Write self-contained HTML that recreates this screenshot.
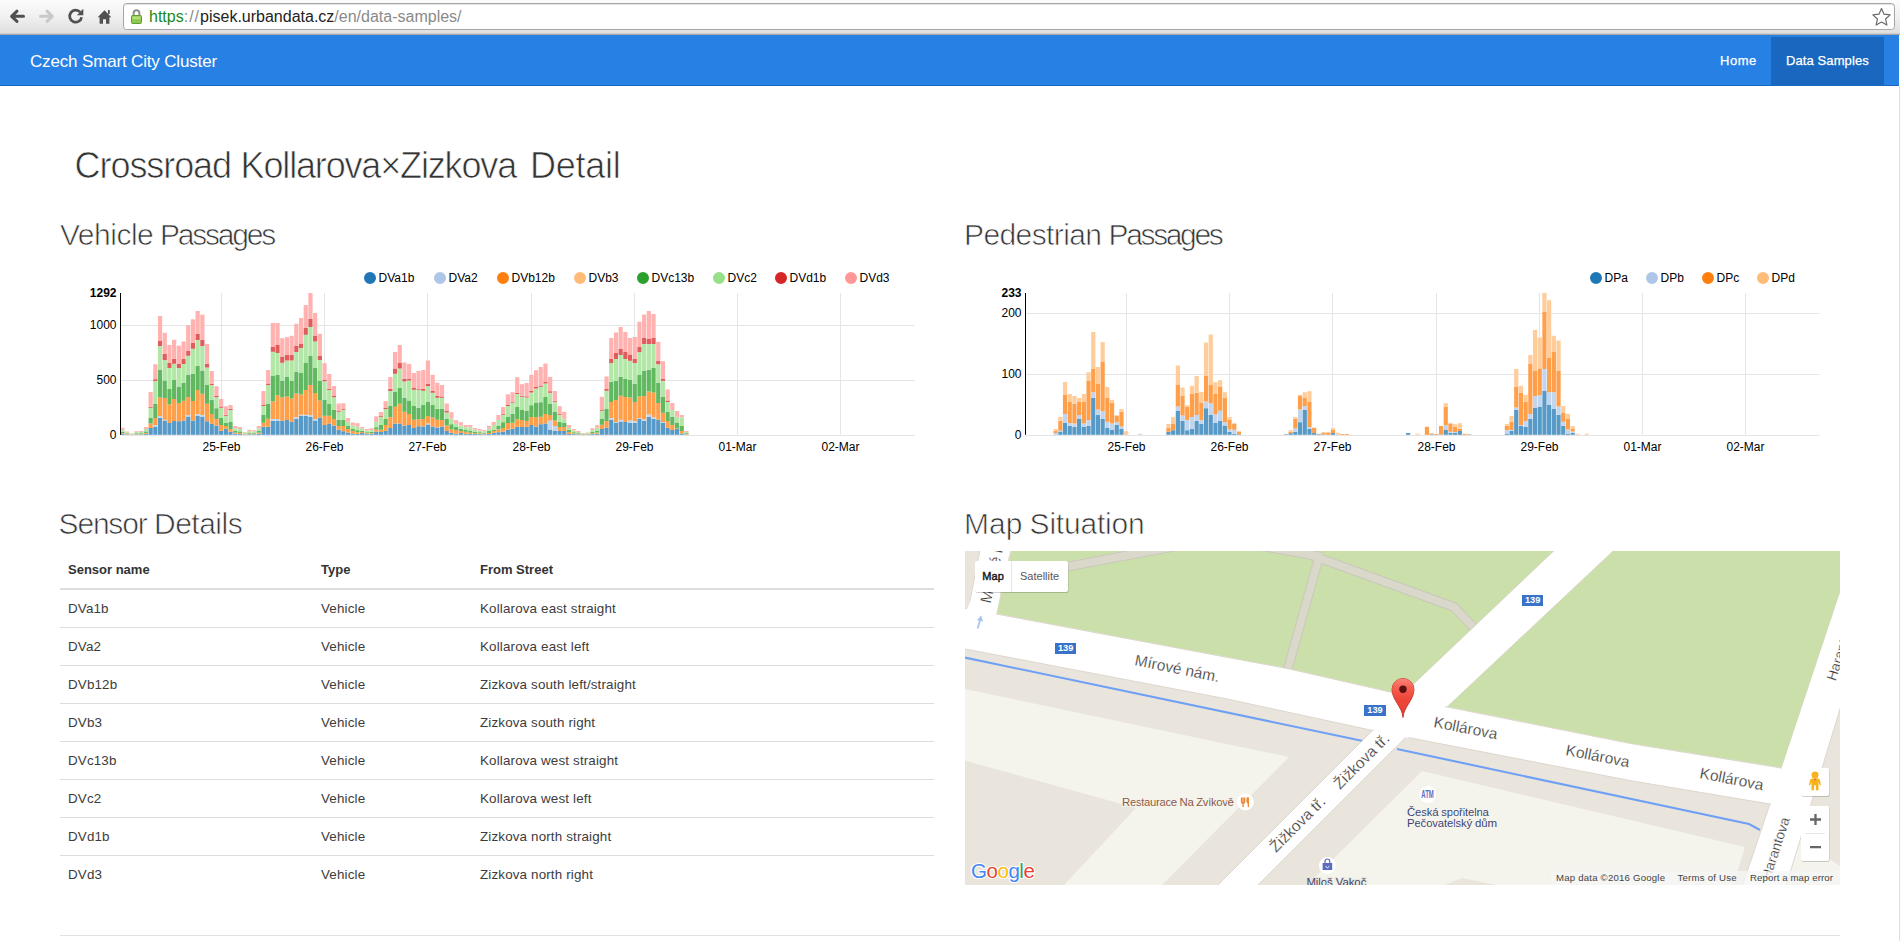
<!DOCTYPE html>
<html lang="en"><head><meta charset="utf-8"><title>Czech Smart City Cluster</title>
<style>
html,body{margin:0;padding:0;background:#fff;overflow:hidden}
body{width:1900px;height:941px;position:relative;font-family:"Liberation Sans",sans-serif;color:#333}
.abs{position:absolute;white-space:nowrap}
#nav{position:absolute;left:0;top:35px;width:1899px;height:50px;background:#2780e3;border-bottom:1px solid #1967be}
#nav .brand{position:absolute;left:30px;top:16px;font-size:17px;line-height:22px;letter-spacing:-0.16px;color:#fff;white-space:nowrap}
#nav .act{position:absolute;left:1771px;top:2px;width:113px;height:48px;background:#1967be}
#nav .lnk{position:absolute;top:17px;font-size:13px;line-height:18px;color:#fff;white-space:nowrap;-webkit-text-stroke:0.25px #fff}
h1,h2{margin:0;font-weight:400;position:absolute;white-space:nowrap;color:#333;-webkit-text-stroke:0.7px #fff}
h1{font-size:36px;line-height:40px}
h2{font-size:30px;line-height:34px}
h1 span,h2 span{position:absolute;top:0;white-space:nowrap}
.chart{position:absolute;overflow:visible}
.chart .g{stroke:#e5e5e5;stroke-width:1}
.chart .t{font:12px "Liberation Sans",sans-serif;fill:#000}
.chart .b{font-weight:700}
#tbl{position:absolute;left:60px;top:551px;width:874px}
.th{position:absolute;left:0;top:0;width:874px;height:37px;border-bottom:2px solid #ddd;font-weight:700;font-size:13px}
.tr{position:absolute;left:60px;width:874px;height:37px;border-bottom:1px solid #ddd;font-size:13.4px;letter-spacing:0.15px;color:#3c3c3c}
.th span,.tr span{position:absolute;top:10px;line-height:18px;white-space:nowrap}
.c1{left:8px}.c2{left:261px}.c3{left:420px}
#hr{position:absolute;left:60px;top:935px;width:1780px;height:1px;background:#e2e2e2}
#map{position:absolute;left:965px;top:551px;width:875px;height:334px;overflow:hidden;background:#e9e5dc}
</style></head><body>
<div id="chrome" style="position:absolute;left:0;top:0;width:1900px;height:35px;background:linear-gradient(#fcfcfc,#f1f1f1 45%,#e0e0e0 92%,#dadada 95%,#a9a9a9 98%);"></div>
<div id="addr" style="position:absolute;left:123px;top:3px;width:1770px;height:25px;border:1px solid #a6a6a6;border-radius:3.5px;background:#fff;box-sizing:content-box;box-shadow:inset 0 1px 1px rgba(0,0,0,.12)"></div>
<svg style="position:absolute;left:0;top:0" width="1900" height="35" viewBox="0 0 1900 35">
<g fill="none" stroke-linecap="round" stroke-linejoin="round">
<path d="M23.5,16.3H12.5M17,11.2L11.6,16.3L17,21.4" stroke="#505050" stroke-width="3"/>
<path d="M40.5,16.3H51.5M47,11.2L52.4,16.3L47,21.4" stroke="#c9c9c9" stroke-width="3"/>
<path d="M80.2,12.2A6,6 0 1 0 81.6,17.2" stroke="#505050" stroke-width="2.7" stroke-linecap="butt"/>
</g>
<path d="M83.3,8.8V15.2H76.9z" fill="#505050"/>
<path d="M104.5,10.2L111.3,17.3H109.4V23.8H106V19.2H103V23.8H99.6V17.3H97.7z" fill="#505050"/>
<rect x="108" y="10" width="1.7" height="4" fill="#505050"/>
<path d="M133.6,15.8V13.2A2.9,3 0 0 1 139.4,13.2V15.8" fill="none" stroke="#8d8d8d" stroke-width="1.9"/>
<rect x="131.5" y="15.5" width="10" height="8" rx="1" fill="#8ec94f" stroke="#5e9e2c" stroke-width="1"/>
<rect x="132.6" y="16.6" width="7.8" height="2.6" fill="#b3e07c"/>
<path d="M1881.5,8.6l2.55,5.6l6.1,0.7l-4.55,4.15l1.25,6.05l-5.35,-3.05l-5.35,3.05l1.25,-6.05l-4.55,-4.15l6.1,-0.7z" fill="#fff" stroke="#6a6a6a" stroke-width="1.2" stroke-linejoin="round"/>
</svg>
<div class="abs" style="left:149px;top:7px;font-size:16px;line-height:20px;letter-spacing:0;color:#222"><span style="color:#1a8a1a">https</span><span style="color:#8a8a8a;letter-spacing:1px">://</span>pisek.urbandata.cz<span style="color:#8a8a8a">/en/data-samples/</span></div>

<div id="nav"><span class="brand">Czech Smart City Cluster</span><div class="act"></div>
<span class="lnk" style="left:1720px;letter-spacing:0.55px">Home</span><span class="lnk" style="left:1786px;letter-spacing:0.1px">Data Samples</span></div>
<h1 style="left:74.6px;top:145.6px"><span style="left:0.0px;letter-spacing:-1.07px">Crossroad</span> <span style="left:166.0px;letter-spacing:-1.16px">Kollarova×Zizkova</span> <span style="left:455.4px;letter-spacing:-0.28px">Detail</span></h1>
<h2 style="left:60.0px;top:218px"><span style="left:0.0px;letter-spacing:-0.5px">Vehicle</span> <span style="left:100.0px;letter-spacing:-2.23px">Passages</span></h2>
<h2 style="left:964.0px;top:218px"><span style="left:0.0px;letter-spacing:-0.6px">Pedestrian</span> <span style="left:144.6px;letter-spacing:-2.37px">Passages</span></h2>
<svg class="chart" style="left:50px;top:265px" width="890" height="200" viewBox="50 265 890 200">
<line x1="221.5" x2="221.5" y1="293.0" y2="434.8" class="g"/>
<line x1="324.5" x2="324.5" y1="293.0" y2="434.8" class="g"/>
<line x1="427.5" x2="427.5" y1="293.0" y2="434.8" class="g"/>
<line x1="531.5" x2="531.5" y1="293.0" y2="434.8" class="g"/>
<line x1="634.5" x2="634.5" y1="293.0" y2="434.8" class="g"/>
<line x1="737.5" x2="737.5" y1="293.0" y2="434.8" class="g"/>
<line x1="840.5" x2="840.5" y1="293.0" y2="434.8" class="g"/>
<line x1="120.5" x2="914.5" y1="435.5" y2="435.5" class="g"/>
<line x1="120.5" x2="914.5" y1="380.5" y2="380.5" class="g"/>
<line x1="120.5" x2="914.5" y1="325.5" y2="325.5" class="g"/>
<rect x="120.35" y="433.96" width="4.2" height="0.84" fill="#5799c7"/>
<rect x="120.35" y="433.12" width="4.2" height="0.84" fill="#ff9f4a"/>
<rect x="120.35" y="431.72" width="4.2" height="1.40" fill="#61b861"/>
<rect x="120.35" y="429.62" width="4.2" height="2.10" fill="#b2e7a7"/>
<rect x="120.35" y="427.80" width="4.2" height="1.82" fill="#ffb2b0"/>
<rect x="125.05" y="434.40" width="4.2" height="0.40" fill="#5799c7"/>
<rect x="125.05" y="434.01" width="4.2" height="0.40" fill="#ff9f4a"/>
<rect x="125.05" y="433.35" width="4.2" height="0.66" fill="#61b861"/>
<rect x="125.05" y="432.36" width="4.2" height="0.99" fill="#b2e7a7"/>
<rect x="125.05" y="431.50" width="4.2" height="0.86" fill="#ffb2b0"/>
<rect x="129.75" y="434.64" width="4.2" height="0.16" fill="#5799c7"/>
<rect x="129.75" y="434.49" width="4.2" height="0.16" fill="#ff9f4a"/>
<rect x="129.75" y="434.23" width="4.2" height="0.26" fill="#61b861"/>
<rect x="129.75" y="433.84" width="4.2" height="0.39" fill="#b2e7a7"/>
<rect x="129.75" y="433.50" width="4.2" height="0.34" fill="#ffb2b0"/>
<rect x="134.45" y="434.37" width="4.2" height="0.43" fill="#5799c7"/>
<rect x="134.45" y="433.94" width="4.2" height="0.43" fill="#ff9f4a"/>
<rect x="134.45" y="433.22" width="4.2" height="0.72" fill="#61b861"/>
<rect x="134.45" y="432.14" width="4.2" height="1.08" fill="#b2e7a7"/>
<rect x="134.45" y="431.20" width="4.2" height="0.94" fill="#ffb2b0"/>
<rect x="139.15" y="434.34" width="4.2" height="0.46" fill="#5799c7"/>
<rect x="139.15" y="433.89" width="4.2" height="0.46" fill="#ff9f4a"/>
<rect x="139.15" y="433.13" width="4.2" height="0.76" fill="#61b861"/>
<rect x="139.15" y="431.99" width="4.2" height="1.14" fill="#b2e7a7"/>
<rect x="139.15" y="431.00" width="4.2" height="0.99" fill="#ffb2b0"/>
<rect x="143.85" y="433.86" width="4.2" height="0.94" fill="#5799c7"/>
<rect x="143.85" y="432.93" width="4.2" height="0.94" fill="#ff9f4a"/>
<rect x="143.85" y="431.37" width="4.2" height="1.56" fill="#61b861"/>
<rect x="143.85" y="429.03" width="4.2" height="2.34" fill="#b2e7a7"/>
<rect x="143.85" y="427.00" width="4.2" height="2.03" fill="#ffb2b0"/>
<rect x="148.55" y="428.00" width="4.2" height="6.80" fill="#5799c7"/>
<rect x="148.55" y="423.50" width="4.2" height="4.50" fill="#ff9f4a"/>
<rect x="148.55" y="418.00" width="4.2" height="5.50" fill="#61b861"/>
<rect x="148.55" y="407.80" width="4.2" height="10.20" fill="#b2e7a7"/>
<rect x="148.55" y="406.80" width="4.2" height="1.00" fill="#e05d5e"/>
<rect x="148.55" y="392.00" width="4.2" height="14.80" fill="#ffb2b0"/>
<rect x="153.25" y="427.00" width="4.2" height="7.80" fill="#5799c7"/>
<rect x="153.25" y="425.00" width="4.2" height="2.00" fill="#c2d5ee"/>
<rect x="153.25" y="418.00" width="4.2" height="7.00" fill="#ff9f4a"/>
<rect x="153.25" y="404.00" width="4.2" height="14.00" fill="#61b861"/>
<rect x="153.25" y="381.00" width="4.2" height="23.00" fill="#b2e7a7"/>
<rect x="153.25" y="379.20" width="4.2" height="1.80" fill="#e05d5e"/>
<rect x="153.25" y="364.20" width="4.2" height="15.00" fill="#ffb2b0"/>
<rect x="157.95" y="417.80" width="4.2" height="17.00" fill="#5799c7"/>
<rect x="157.95" y="416.00" width="4.2" height="1.80" fill="#c2d5ee"/>
<rect x="157.95" y="397.50" width="4.2" height="18.50" fill="#ff9f4a"/>
<rect x="157.95" y="370.00" width="4.2" height="27.50" fill="#61b861"/>
<rect x="157.95" y="346.00" width="4.2" height="24.00" fill="#b2e7a7"/>
<rect x="157.95" y="341.00" width="4.2" height="5.00" fill="#e05d5e"/>
<rect x="157.95" y="316.00" width="4.2" height="25.00" fill="#ffb2b0"/>
<rect x="162.65" y="420.50" width="4.2" height="14.30" fill="#5799c7"/>
<rect x="162.65" y="419.80" width="4.2" height="0.70" fill="#c2d5ee"/>
<rect x="162.65" y="398.00" width="4.2" height="21.80" fill="#ff9f4a"/>
<rect x="162.65" y="380.50" width="4.2" height="17.50" fill="#61b861"/>
<rect x="162.65" y="360.00" width="4.2" height="20.50" fill="#b2e7a7"/>
<rect x="162.65" y="354.00" width="4.2" height="6.00" fill="#e05d5e"/>
<rect x="162.65" y="332.80" width="4.2" height="21.20" fill="#ffb2b0"/>
<rect x="167.35" y="423.00" width="4.2" height="11.80" fill="#5799c7"/>
<rect x="167.35" y="404.50" width="4.2" height="18.50" fill="#ff9f4a"/>
<rect x="167.35" y="389.00" width="4.2" height="15.50" fill="#61b861"/>
<rect x="167.35" y="368.00" width="4.2" height="21.00" fill="#b2e7a7"/>
<rect x="167.35" y="363.00" width="4.2" height="5.00" fill="#e05d5e"/>
<rect x="167.35" y="345.00" width="4.2" height="18.00" fill="#ffb2b0"/>
<rect x="172.05" y="421.00" width="4.2" height="13.80" fill="#5799c7"/>
<rect x="172.05" y="399.00" width="4.2" height="22.00" fill="#ff9f4a"/>
<rect x="172.05" y="380.00" width="4.2" height="19.00" fill="#61b861"/>
<rect x="172.05" y="363.80" width="4.2" height="16.20" fill="#b2e7a7"/>
<rect x="172.05" y="358.80" width="4.2" height="5.00" fill="#e05d5e"/>
<rect x="172.05" y="339.80" width="4.2" height="19.00" fill="#ffb2b0"/>
<rect x="176.75" y="421.20" width="4.2" height="13.60" fill="#5799c7"/>
<rect x="176.75" y="403.00" width="4.2" height="18.20" fill="#ff9f4a"/>
<rect x="176.75" y="386.50" width="4.2" height="16.50" fill="#61b861"/>
<rect x="176.75" y="368.00" width="4.2" height="18.50" fill="#b2e7a7"/>
<rect x="176.75" y="364.00" width="4.2" height="4.00" fill="#e05d5e"/>
<rect x="176.75" y="345.70" width="4.2" height="18.30" fill="#ffb2b0"/>
<rect x="181.45" y="420.50" width="4.2" height="14.30" fill="#5799c7"/>
<rect x="181.45" y="400.80" width="4.2" height="19.70" fill="#ff9f4a"/>
<rect x="181.45" y="383.00" width="4.2" height="17.80" fill="#61b861"/>
<rect x="181.45" y="364.00" width="4.2" height="19.00" fill="#b2e7a7"/>
<rect x="181.45" y="359.00" width="4.2" height="5.00" fill="#e05d5e"/>
<rect x="181.45" y="341.50" width="4.2" height="17.50" fill="#ffb2b0"/>
<rect x="186.15" y="416.50" width="4.2" height="18.30" fill="#5799c7"/>
<rect x="186.15" y="415.00" width="4.2" height="1.50" fill="#c2d5ee"/>
<rect x="186.15" y="397.00" width="4.2" height="18.00" fill="#ff9f4a"/>
<rect x="186.15" y="375.00" width="4.2" height="22.00" fill="#61b861"/>
<rect x="186.15" y="355.80" width="4.2" height="19.20" fill="#b2e7a7"/>
<rect x="186.15" y="351.00" width="4.2" height="4.80" fill="#e05d5e"/>
<rect x="186.15" y="325.30" width="4.2" height="25.70" fill="#ffb2b0"/>
<rect x="190.85" y="420.50" width="4.2" height="14.30" fill="#5799c7"/>
<rect x="190.85" y="401.00" width="4.2" height="19.50" fill="#ff9f4a"/>
<rect x="190.85" y="374.00" width="4.2" height="27.00" fill="#61b861"/>
<rect x="190.85" y="348.80" width="4.2" height="25.20" fill="#b2e7a7"/>
<rect x="190.85" y="343.00" width="4.2" height="5.80" fill="#e05d5e"/>
<rect x="190.85" y="319.30" width="4.2" height="23.70" fill="#ffb2b0"/>
<rect x="195.55" y="416.00" width="4.2" height="18.80" fill="#5799c7"/>
<rect x="195.55" y="414.00" width="4.2" height="2.00" fill="#c2d5ee"/>
<rect x="195.55" y="390.00" width="4.2" height="24.00" fill="#ff9f4a"/>
<rect x="195.55" y="366.00" width="4.2" height="24.00" fill="#61b861"/>
<rect x="195.55" y="340.00" width="4.2" height="26.00" fill="#b2e7a7"/>
<rect x="195.55" y="334.00" width="4.2" height="6.00" fill="#e05d5e"/>
<rect x="195.55" y="311.00" width="4.2" height="23.00" fill="#ffb2b0"/>
<rect x="200.25" y="416.50" width="4.2" height="18.30" fill="#5799c7"/>
<rect x="200.25" y="415.00" width="4.2" height="1.50" fill="#c2d5ee"/>
<rect x="200.25" y="393.80" width="4.2" height="21.20" fill="#ff9f4a"/>
<rect x="200.25" y="370.50" width="4.2" height="23.30" fill="#61b861"/>
<rect x="200.25" y="346.00" width="4.2" height="24.50" fill="#b2e7a7"/>
<rect x="200.25" y="340.00" width="4.2" height="6.00" fill="#e05d5e"/>
<rect x="200.25" y="314.70" width="4.2" height="25.30" fill="#ffb2b0"/>
<rect x="204.95" y="421.20" width="4.2" height="13.60" fill="#5799c7"/>
<rect x="204.95" y="403.80" width="4.2" height="17.40" fill="#ff9f4a"/>
<rect x="204.95" y="385.00" width="4.2" height="18.80" fill="#61b861"/>
<rect x="204.95" y="367.50" width="4.2" height="17.50" fill="#b2e7a7"/>
<rect x="204.95" y="364.00" width="4.2" height="3.50" fill="#e05d5e"/>
<rect x="204.95" y="343.80" width="4.2" height="20.20" fill="#ffb2b0"/>
<rect x="209.65" y="423.80" width="4.2" height="11.00" fill="#5799c7"/>
<rect x="209.65" y="414.00" width="4.2" height="9.80" fill="#ff9f4a"/>
<rect x="209.65" y="400.00" width="4.2" height="14.00" fill="#61b861"/>
<rect x="209.65" y="385.00" width="4.2" height="15.00" fill="#b2e7a7"/>
<rect x="209.65" y="383.80" width="4.2" height="1.20" fill="#e05d5e"/>
<rect x="209.65" y="371.00" width="4.2" height="12.80" fill="#ffb2b0"/>
<rect x="214.35" y="425.50" width="4.2" height="9.30" fill="#5799c7"/>
<rect x="214.35" y="419.00" width="4.2" height="6.50" fill="#ff9f4a"/>
<rect x="214.35" y="408.20" width="4.2" height="10.80" fill="#61b861"/>
<rect x="214.35" y="397.20" width="4.2" height="11.00" fill="#b2e7a7"/>
<rect x="214.35" y="395.80" width="4.2" height="1.40" fill="#e05d5e"/>
<rect x="214.35" y="386.20" width="4.2" height="9.60" fill="#ffb2b0"/>
<rect x="219.05" y="430.80" width="4.2" height="4.00" fill="#5799c7"/>
<rect x="219.05" y="425.00" width="4.2" height="5.80" fill="#ff9f4a"/>
<rect x="219.05" y="417.80" width="4.2" height="7.20" fill="#61b861"/>
<rect x="219.05" y="407.80" width="4.2" height="10.00" fill="#b2e7a7"/>
<rect x="219.05" y="406.50" width="4.2" height="1.30" fill="#e05d5e"/>
<rect x="219.05" y="399.00" width="4.2" height="7.50" fill="#ffb2b0"/>
<rect x="223.75" y="428.80" width="4.2" height="6.00" fill="#5799c7"/>
<rect x="223.75" y="426.00" width="4.2" height="2.80" fill="#ff9f4a"/>
<rect x="223.75" y="422.80" width="4.2" height="3.20" fill="#61b861"/>
<rect x="223.75" y="415.80" width="4.2" height="7.00" fill="#b2e7a7"/>
<rect x="223.75" y="414.80" width="4.2" height="1.00" fill="#e05d5e"/>
<rect x="223.75" y="406.30" width="4.2" height="8.50" fill="#ffb2b0"/>
<rect x="228.45" y="431.80" width="4.2" height="3.00" fill="#5799c7"/>
<rect x="228.45" y="429.00" width="4.2" height="2.80" fill="#ff9f4a"/>
<rect x="228.45" y="422.00" width="4.2" height="7.00" fill="#61b861"/>
<rect x="228.45" y="410.00" width="4.2" height="12.00" fill="#b2e7a7"/>
<rect x="228.45" y="408.80" width="4.2" height="1.20" fill="#e05d5e"/>
<rect x="228.45" y="405.00" width="4.2" height="3.80" fill="#ffb2b0"/>
<rect x="233.15" y="433.74" width="4.2" height="1.06" fill="#5799c7"/>
<rect x="233.15" y="432.69" width="4.2" height="1.06" fill="#ff9f4a"/>
<rect x="233.15" y="430.93" width="4.2" height="1.76" fill="#61b861"/>
<rect x="233.15" y="428.29" width="4.2" height="2.64" fill="#b2e7a7"/>
<rect x="233.15" y="426.00" width="4.2" height="2.29" fill="#ffb2b0"/>
<rect x="237.85" y="433.86" width="4.2" height="0.94" fill="#5799c7"/>
<rect x="237.85" y="432.93" width="4.2" height="0.94" fill="#ff9f4a"/>
<rect x="237.85" y="431.37" width="4.2" height="1.56" fill="#61b861"/>
<rect x="237.85" y="429.03" width="4.2" height="2.34" fill="#b2e7a7"/>
<rect x="237.85" y="427.00" width="4.2" height="2.03" fill="#ffb2b0"/>
<rect x="242.55" y="434.46" width="4.2" height="0.34" fill="#5799c7"/>
<rect x="242.55" y="434.13" width="4.2" height="0.34" fill="#ff9f4a"/>
<rect x="242.55" y="433.57" width="4.2" height="0.56" fill="#61b861"/>
<rect x="242.55" y="432.73" width="4.2" height="0.84" fill="#b2e7a7"/>
<rect x="242.55" y="432.00" width="4.2" height="0.73" fill="#ffb2b0"/>
<rect x="247.25" y="434.20" width="4.2" height="0.60" fill="#5799c7"/>
<rect x="247.25" y="433.60" width="4.2" height="0.60" fill="#ff9f4a"/>
<rect x="247.25" y="432.60" width="4.2" height="1.00" fill="#61b861"/>
<rect x="247.25" y="431.10" width="4.2" height="1.50" fill="#b2e7a7"/>
<rect x="247.25" y="429.80" width="4.2" height="1.30" fill="#ffb2b0"/>
<rect x="251.95" y="434.25" width="4.2" height="0.55" fill="#5799c7"/>
<rect x="251.95" y="433.70" width="4.2" height="0.55" fill="#ff9f4a"/>
<rect x="251.95" y="432.78" width="4.2" height="0.92" fill="#61b861"/>
<rect x="251.95" y="431.40" width="4.2" height="1.38" fill="#b2e7a7"/>
<rect x="251.95" y="430.20" width="4.2" height="1.20" fill="#ffb2b0"/>
<rect x="256.65" y="433.74" width="4.2" height="1.06" fill="#5799c7"/>
<rect x="256.65" y="432.69" width="4.2" height="1.06" fill="#ff9f4a"/>
<rect x="256.65" y="430.93" width="4.2" height="1.76" fill="#61b861"/>
<rect x="256.65" y="428.29" width="4.2" height="2.64" fill="#b2e7a7"/>
<rect x="256.65" y="426.00" width="4.2" height="2.29" fill="#ffb2b0"/>
<rect x="261.35" y="426.80" width="4.2" height="8.00" fill="#5799c7"/>
<rect x="261.35" y="422.80" width="4.2" height="4.00" fill="#ff9f4a"/>
<rect x="261.35" y="415.00" width="4.2" height="7.80" fill="#61b861"/>
<rect x="261.35" y="406.00" width="4.2" height="9.00" fill="#b2e7a7"/>
<rect x="261.35" y="405.00" width="4.2" height="1.00" fill="#e05d5e"/>
<rect x="261.35" y="391.00" width="4.2" height="14.00" fill="#ffb2b0"/>
<rect x="266.05" y="426.80" width="4.2" height="8.00" fill="#5799c7"/>
<rect x="266.05" y="418.80" width="4.2" height="8.00" fill="#ff9f4a"/>
<rect x="266.05" y="404.00" width="4.2" height="14.80" fill="#61b861"/>
<rect x="266.05" y="385.00" width="4.2" height="19.00" fill="#b2e7a7"/>
<rect x="266.05" y="383.50" width="4.2" height="1.50" fill="#e05d5e"/>
<rect x="266.05" y="370.00" width="4.2" height="13.50" fill="#ffb2b0"/>
<rect x="270.75" y="420.80" width="4.2" height="14.00" fill="#5799c7"/>
<rect x="270.75" y="419.00" width="4.2" height="1.80" fill="#c2d5ee"/>
<rect x="270.75" y="401.50" width="4.2" height="17.50" fill="#ff9f4a"/>
<rect x="270.75" y="376.00" width="4.2" height="25.50" fill="#61b861"/>
<rect x="270.75" y="351.80" width="4.2" height="24.20" fill="#b2e7a7"/>
<rect x="270.75" y="347.00" width="4.2" height="4.80" fill="#e05d5e"/>
<rect x="270.75" y="323.00" width="4.2" height="24.00" fill="#ffb2b0"/>
<rect x="275.45" y="420.50" width="4.2" height="14.30" fill="#5799c7"/>
<rect x="275.45" y="419.00" width="4.2" height="1.50" fill="#c2d5ee"/>
<rect x="275.45" y="395.20" width="4.2" height="23.80" fill="#ff9f4a"/>
<rect x="275.45" y="375.00" width="4.2" height="20.20" fill="#61b861"/>
<rect x="275.45" y="353.00" width="4.2" height="22.00" fill="#b2e7a7"/>
<rect x="275.45" y="345.00" width="4.2" height="8.00" fill="#e05d5e"/>
<rect x="275.45" y="323.00" width="4.2" height="22.00" fill="#ffb2b0"/>
<rect x="280.15" y="420.80" width="4.2" height="14.00" fill="#5799c7"/>
<rect x="280.15" y="397.20" width="4.2" height="23.60" fill="#ff9f4a"/>
<rect x="280.15" y="380.80" width="4.2" height="16.40" fill="#61b861"/>
<rect x="280.15" y="362.80" width="4.2" height="18.00" fill="#b2e7a7"/>
<rect x="280.15" y="356.50" width="4.2" height="6.30" fill="#e05d5e"/>
<rect x="280.15" y="338.20" width="4.2" height="18.30" fill="#ffb2b0"/>
<rect x="284.85" y="420.00" width="4.2" height="14.80" fill="#5799c7"/>
<rect x="284.85" y="396.50" width="4.2" height="23.50" fill="#ff9f4a"/>
<rect x="284.85" y="377.00" width="4.2" height="19.50" fill="#61b861"/>
<rect x="284.85" y="360.50" width="4.2" height="16.50" fill="#b2e7a7"/>
<rect x="284.85" y="355.00" width="4.2" height="5.50" fill="#e05d5e"/>
<rect x="284.85" y="337.20" width="4.2" height="17.80" fill="#ffb2b0"/>
<rect x="289.55" y="421.80" width="4.2" height="13.00" fill="#5799c7"/>
<rect x="289.55" y="398.50" width="4.2" height="23.30" fill="#ff9f4a"/>
<rect x="289.55" y="381.00" width="4.2" height="17.50" fill="#61b861"/>
<rect x="289.55" y="360.50" width="4.2" height="20.50" fill="#b2e7a7"/>
<rect x="289.55" y="354.80" width="4.2" height="5.70" fill="#e05d5e"/>
<rect x="289.55" y="335.80" width="4.2" height="19.00" fill="#ffb2b0"/>
<rect x="294.25" y="419.00" width="4.2" height="15.80" fill="#5799c7"/>
<rect x="294.25" y="417.20" width="4.2" height="1.80" fill="#c2d5ee"/>
<rect x="294.25" y="393.50" width="4.2" height="23.70" fill="#ff9f4a"/>
<rect x="294.25" y="372.00" width="4.2" height="21.50" fill="#61b861"/>
<rect x="294.25" y="352.00" width="4.2" height="20.00" fill="#b2e7a7"/>
<rect x="294.25" y="346.00" width="4.2" height="6.00" fill="#e05d5e"/>
<rect x="294.25" y="323.80" width="4.2" height="22.20" fill="#ffb2b0"/>
<rect x="298.95" y="416.00" width="4.2" height="18.80" fill="#5799c7"/>
<rect x="298.95" y="414.80" width="4.2" height="1.20" fill="#c2d5ee"/>
<rect x="298.95" y="394.50" width="4.2" height="20.30" fill="#ff9f4a"/>
<rect x="298.95" y="373.00" width="4.2" height="21.50" fill="#61b861"/>
<rect x="298.95" y="348.00" width="4.2" height="25.00" fill="#b2e7a7"/>
<rect x="298.95" y="343.50" width="4.2" height="4.50" fill="#e05d5e"/>
<rect x="298.95" y="318.00" width="4.2" height="25.50" fill="#ffb2b0"/>
<rect x="303.65" y="416.00" width="4.2" height="18.80" fill="#5799c7"/>
<rect x="303.65" y="414.80" width="4.2" height="1.20" fill="#c2d5ee"/>
<rect x="303.65" y="390.00" width="4.2" height="24.80" fill="#ff9f4a"/>
<rect x="303.65" y="363.00" width="4.2" height="27.00" fill="#61b861"/>
<rect x="303.65" y="334.80" width="4.2" height="28.20" fill="#b2e7a7"/>
<rect x="303.65" y="328.00" width="4.2" height="6.80" fill="#e05d5e"/>
<rect x="303.65" y="305.00" width="4.2" height="23.00" fill="#ffb2b0"/>
<rect x="308.35" y="417.00" width="4.2" height="17.80" fill="#5799c7"/>
<rect x="308.35" y="415.00" width="4.2" height="2.00" fill="#c2d5ee"/>
<rect x="308.35" y="385.00" width="4.2" height="30.00" fill="#ff9f4a"/>
<rect x="308.35" y="356.00" width="4.2" height="29.00" fill="#61b861"/>
<rect x="308.35" y="327.00" width="4.2" height="29.00" fill="#b2e7a7"/>
<rect x="308.35" y="319.00" width="4.2" height="8.00" fill="#e05d5e"/>
<rect x="308.35" y="293.00" width="4.2" height="26.00" fill="#ffb2b0"/>
<rect x="313.05" y="420.50" width="4.2" height="14.30" fill="#5799c7"/>
<rect x="313.05" y="419.00" width="4.2" height="1.50" fill="#c2d5ee"/>
<rect x="313.05" y="393.00" width="4.2" height="26.00" fill="#ff9f4a"/>
<rect x="313.05" y="368.00" width="4.2" height="25.00" fill="#61b861"/>
<rect x="313.05" y="341.50" width="4.2" height="26.50" fill="#b2e7a7"/>
<rect x="313.05" y="336.00" width="4.2" height="5.50" fill="#e05d5e"/>
<rect x="313.05" y="313.00" width="4.2" height="23.00" fill="#ffb2b0"/>
<rect x="317.75" y="417.50" width="4.2" height="17.30" fill="#5799c7"/>
<rect x="317.75" y="400.50" width="4.2" height="17.00" fill="#ff9f4a"/>
<rect x="317.75" y="381.00" width="4.2" height="19.50" fill="#61b861"/>
<rect x="317.75" y="360.00" width="4.2" height="21.00" fill="#b2e7a7"/>
<rect x="317.75" y="356.00" width="4.2" height="4.00" fill="#e05d5e"/>
<rect x="317.75" y="333.80" width="4.2" height="22.20" fill="#ffb2b0"/>
<rect x="322.45" y="425.00" width="4.2" height="9.80" fill="#5799c7"/>
<rect x="322.45" y="415.80" width="4.2" height="9.20" fill="#ff9f4a"/>
<rect x="322.45" y="400.00" width="4.2" height="15.80" fill="#61b861"/>
<rect x="322.45" y="381.20" width="4.2" height="18.80" fill="#b2e7a7"/>
<rect x="322.45" y="380.00" width="4.2" height="1.20" fill="#e05d5e"/>
<rect x="322.45" y="363.20" width="4.2" height="16.80" fill="#ffb2b0"/>
<rect x="327.15" y="423.50" width="4.2" height="11.30" fill="#5799c7"/>
<rect x="327.15" y="415.80" width="4.2" height="7.70" fill="#ff9f4a"/>
<rect x="327.15" y="403.50" width="4.2" height="12.30" fill="#61b861"/>
<rect x="327.15" y="390.00" width="4.2" height="13.50" fill="#b2e7a7"/>
<rect x="327.15" y="388.80" width="4.2" height="1.20" fill="#e05d5e"/>
<rect x="327.15" y="374.00" width="4.2" height="14.80" fill="#ffb2b0"/>
<rect x="331.85" y="425.50" width="4.2" height="9.30" fill="#5799c7"/>
<rect x="331.85" y="419.00" width="4.2" height="6.50" fill="#ff9f4a"/>
<rect x="331.85" y="410.00" width="4.2" height="9.00" fill="#61b861"/>
<rect x="331.85" y="397.20" width="4.2" height="12.80" fill="#b2e7a7"/>
<rect x="331.85" y="396.00" width="4.2" height="1.20" fill="#e05d5e"/>
<rect x="331.85" y="386.00" width="4.2" height="10.00" fill="#ffb2b0"/>
<rect x="336.55" y="429.80" width="4.2" height="5.00" fill="#5799c7"/>
<rect x="336.55" y="426.00" width="4.2" height="3.80" fill="#ff9f4a"/>
<rect x="336.55" y="419.80" width="4.2" height="6.20" fill="#61b861"/>
<rect x="336.55" y="411.80" width="4.2" height="8.00" fill="#b2e7a7"/>
<rect x="336.55" y="411.00" width="4.2" height="0.80" fill="#e05d5e"/>
<rect x="336.55" y="403.50" width="4.2" height="7.50" fill="#ffb2b0"/>
<rect x="341.25" y="431.20" width="4.2" height="3.60" fill="#5799c7"/>
<rect x="341.25" y="426.00" width="4.2" height="5.20" fill="#ff9f4a"/>
<rect x="341.25" y="420.00" width="4.2" height="6.00" fill="#61b861"/>
<rect x="341.25" y="409.80" width="4.2" height="10.20" fill="#b2e7a7"/>
<rect x="341.25" y="409.00" width="4.2" height="0.80" fill="#e05d5e"/>
<rect x="341.25" y="403.20" width="4.2" height="5.80" fill="#ffb2b0"/>
<rect x="345.95" y="432.50" width="4.2" height="2.30" fill="#5799c7"/>
<rect x="345.95" y="429.00" width="4.2" height="3.50" fill="#ff9f4a"/>
<rect x="345.95" y="426.00" width="4.2" height="3.00" fill="#61b861"/>
<rect x="345.95" y="421.80" width="4.2" height="4.20" fill="#b2e7a7"/>
<rect x="345.95" y="418.00" width="4.2" height="3.80" fill="#ffb2b0"/>
<rect x="350.65" y="433.80" width="4.2" height="1.00" fill="#5799c7"/>
<rect x="350.65" y="431.00" width="4.2" height="2.80" fill="#ff9f4a"/>
<rect x="350.65" y="429.00" width="4.2" height="2.00" fill="#61b861"/>
<rect x="350.65" y="425.50" width="4.2" height="3.50" fill="#b2e7a7"/>
<rect x="350.65" y="422.50" width="4.2" height="3.00" fill="#ffb2b0"/>
<rect x="355.35" y="434.00" width="4.2" height="0.80" fill="#5799c7"/>
<rect x="355.35" y="432.20" width="4.2" height="1.80" fill="#ff9f4a"/>
<rect x="355.35" y="430.20" width="4.2" height="2.00" fill="#61b861"/>
<rect x="355.35" y="426.50" width="4.2" height="3.70" fill="#b2e7a7"/>
<rect x="355.35" y="423.20" width="4.2" height="3.30" fill="#ffb2b0"/>
<rect x="360.05" y="433.00" width="4.2" height="1.80" fill="#5799c7"/>
<rect x="360.05" y="432.00" width="4.2" height="1.00" fill="#ff9f4a"/>
<rect x="360.05" y="430.80" width="4.2" height="1.20" fill="#61b861"/>
<rect x="360.05" y="428.50" width="4.2" height="2.30" fill="#b2e7a7"/>
<rect x="360.05" y="427.00" width="4.2" height="1.50" fill="#ffb2b0"/>
<rect x="364.75" y="434.10" width="4.2" height="0.70" fill="#5799c7"/>
<rect x="364.75" y="433.41" width="4.2" height="0.70" fill="#ff9f4a"/>
<rect x="364.75" y="432.25" width="4.2" height="1.16" fill="#61b861"/>
<rect x="364.75" y="430.51" width="4.2" height="1.74" fill="#b2e7a7"/>
<rect x="364.75" y="429.00" width="4.2" height="1.51" fill="#ffb2b0"/>
<rect x="369.45" y="434.01" width="4.2" height="0.79" fill="#5799c7"/>
<rect x="369.45" y="433.22" width="4.2" height="0.79" fill="#ff9f4a"/>
<rect x="369.45" y="431.90" width="4.2" height="1.32" fill="#61b861"/>
<rect x="369.45" y="429.92" width="4.2" height="1.98" fill="#b2e7a7"/>
<rect x="369.45" y="428.20" width="4.2" height="1.72" fill="#ffb2b0"/>
<rect x="374.15" y="431.50" width="4.2" height="3.30" fill="#5799c7"/>
<rect x="374.15" y="429.50" width="4.2" height="2.00" fill="#ff9f4a"/>
<rect x="374.15" y="427.20" width="4.2" height="2.30" fill="#61b861"/>
<rect x="374.15" y="421.80" width="4.2" height="5.40" fill="#b2e7a7"/>
<rect x="374.15" y="416.30" width="4.2" height="5.50" fill="#ffb2b0"/>
<rect x="378.85" y="432.00" width="4.2" height="2.80" fill="#5799c7"/>
<rect x="378.85" y="429.80" width="4.2" height="2.20" fill="#ff9f4a"/>
<rect x="378.85" y="425.00" width="4.2" height="4.80" fill="#61b861"/>
<rect x="378.85" y="416.80" width="4.2" height="8.20" fill="#b2e7a7"/>
<rect x="378.85" y="416.00" width="4.2" height="0.80" fill="#e05d5e"/>
<rect x="378.85" y="412.00" width="4.2" height="4.00" fill="#ffb2b0"/>
<rect x="383.55" y="430.80" width="4.2" height="4.00" fill="#5799c7"/>
<rect x="383.55" y="425.00" width="4.2" height="5.80" fill="#ff9f4a"/>
<rect x="383.55" y="419.00" width="4.2" height="6.00" fill="#61b861"/>
<rect x="383.55" y="409.00" width="4.2" height="10.00" fill="#b2e7a7"/>
<rect x="383.55" y="408.00" width="4.2" height="1.00" fill="#e05d5e"/>
<rect x="383.55" y="401.20" width="4.2" height="6.80" fill="#ffb2b0"/>
<rect x="388.25" y="428.00" width="4.2" height="6.80" fill="#5799c7"/>
<rect x="388.25" y="417.20" width="4.2" height="10.80" fill="#ff9f4a"/>
<rect x="388.25" y="406.00" width="4.2" height="11.20" fill="#61b861"/>
<rect x="388.25" y="391.00" width="4.2" height="15.00" fill="#b2e7a7"/>
<rect x="388.25" y="388.80" width="4.2" height="2.20" fill="#e05d5e"/>
<rect x="388.25" y="377.00" width="4.2" height="11.80" fill="#ffb2b0"/>
<rect x="392.95" y="423.50" width="4.2" height="11.30" fill="#5799c7"/>
<rect x="392.95" y="406.80" width="4.2" height="16.70" fill="#ff9f4a"/>
<rect x="392.95" y="392.00" width="4.2" height="14.80" fill="#61b861"/>
<rect x="392.95" y="373.80" width="4.2" height="18.20" fill="#b2e7a7"/>
<rect x="392.95" y="368.50" width="4.2" height="5.30" fill="#e05d5e"/>
<rect x="392.95" y="352.00" width="4.2" height="16.50" fill="#ffb2b0"/>
<rect x="397.65" y="423.50" width="4.2" height="11.30" fill="#5799c7"/>
<rect x="397.65" y="403.80" width="4.2" height="19.70" fill="#ff9f4a"/>
<rect x="397.65" y="388.00" width="4.2" height="15.80" fill="#61b861"/>
<rect x="397.65" y="368.50" width="4.2" height="19.50" fill="#b2e7a7"/>
<rect x="397.65" y="363.00" width="4.2" height="5.50" fill="#e05d5e"/>
<rect x="397.65" y="345.00" width="4.2" height="18.00" fill="#ffb2b0"/>
<rect x="402.35" y="425.50" width="4.2" height="9.30" fill="#5799c7"/>
<rect x="402.35" y="411.80" width="4.2" height="13.70" fill="#ff9f4a"/>
<rect x="402.35" y="398.00" width="4.2" height="13.80" fill="#61b861"/>
<rect x="402.35" y="381.50" width="4.2" height="16.50" fill="#b2e7a7"/>
<rect x="402.35" y="379.00" width="4.2" height="2.50" fill="#e05d5e"/>
<rect x="402.35" y="362.50" width="4.2" height="16.50" fill="#ffb2b0"/>
<rect x="407.05" y="425.00" width="4.2" height="9.80" fill="#5799c7"/>
<rect x="407.05" y="414.00" width="4.2" height="11.00" fill="#ff9f4a"/>
<rect x="407.05" y="400.50" width="4.2" height="13.50" fill="#61b861"/>
<rect x="407.05" y="380.50" width="4.2" height="20.00" fill="#b2e7a7"/>
<rect x="407.05" y="379.00" width="4.2" height="1.50" fill="#e05d5e"/>
<rect x="407.05" y="364.00" width="4.2" height="15.00" fill="#ffb2b0"/>
<rect x="411.75" y="428.00" width="4.2" height="6.80" fill="#5799c7"/>
<rect x="411.75" y="419.80" width="4.2" height="8.20" fill="#ff9f4a"/>
<rect x="411.75" y="406.00" width="4.2" height="13.80" fill="#61b861"/>
<rect x="411.75" y="389.80" width="4.2" height="16.20" fill="#b2e7a7"/>
<rect x="411.75" y="388.00" width="4.2" height="1.80" fill="#e05d5e"/>
<rect x="411.75" y="373.00" width="4.2" height="15.00" fill="#ffb2b0"/>
<rect x="416.45" y="426.20" width="4.2" height="8.60" fill="#5799c7"/>
<rect x="416.45" y="419.20" width="4.2" height="7.00" fill="#ff9f4a"/>
<rect x="416.45" y="408.00" width="4.2" height="11.20" fill="#61b861"/>
<rect x="416.45" y="389.80" width="4.2" height="18.20" fill="#b2e7a7"/>
<rect x="416.45" y="388.80" width="4.2" height="1.00" fill="#e05d5e"/>
<rect x="416.45" y="371.00" width="4.2" height="17.80" fill="#ffb2b0"/>
<rect x="421.15" y="426.50" width="4.2" height="8.30" fill="#5799c7"/>
<rect x="421.15" y="419.00" width="4.2" height="7.50" fill="#ff9f4a"/>
<rect x="421.15" y="405.00" width="4.2" height="14.00" fill="#61b861"/>
<rect x="421.15" y="390.80" width="4.2" height="14.20" fill="#b2e7a7"/>
<rect x="421.15" y="389.00" width="4.2" height="1.80" fill="#e05d5e"/>
<rect x="421.15" y="370.00" width="4.2" height="19.00" fill="#ffb2b0"/>
<rect x="425.85" y="424.50" width="4.2" height="10.30" fill="#5799c7"/>
<rect x="425.85" y="423.50" width="4.2" height="1.00" fill="#c2d5ee"/>
<rect x="425.85" y="416.00" width="4.2" height="7.50" fill="#ff9f4a"/>
<rect x="425.85" y="402.00" width="4.2" height="14.00" fill="#61b861"/>
<rect x="425.85" y="386.20" width="4.2" height="15.80" fill="#b2e7a7"/>
<rect x="425.85" y="384.00" width="4.2" height="2.20" fill="#e05d5e"/>
<rect x="425.85" y="360.50" width="4.2" height="23.50" fill="#ffb2b0"/>
<rect x="430.55" y="426.50" width="4.2" height="8.30" fill="#5799c7"/>
<rect x="430.55" y="417.50" width="4.2" height="9.00" fill="#ff9f4a"/>
<rect x="430.55" y="405.00" width="4.2" height="12.50" fill="#61b861"/>
<rect x="430.55" y="392.80" width="4.2" height="12.20" fill="#b2e7a7"/>
<rect x="430.55" y="391.00" width="4.2" height="1.80" fill="#e05d5e"/>
<rect x="430.55" y="374.80" width="4.2" height="16.20" fill="#ffb2b0"/>
<rect x="435.25" y="427.50" width="4.2" height="7.30" fill="#5799c7"/>
<rect x="435.25" y="419.80" width="4.2" height="7.70" fill="#ff9f4a"/>
<rect x="435.25" y="408.80" width="4.2" height="11.00" fill="#61b861"/>
<rect x="435.25" y="397.80" width="4.2" height="11.00" fill="#b2e7a7"/>
<rect x="435.25" y="396.00" width="4.2" height="1.80" fill="#e05d5e"/>
<rect x="435.25" y="382.80" width="4.2" height="13.20" fill="#ffb2b0"/>
<rect x="439.95" y="426.50" width="4.2" height="8.30" fill="#5799c7"/>
<rect x="439.95" y="420.00" width="4.2" height="6.50" fill="#ff9f4a"/>
<rect x="439.95" y="409.00" width="4.2" height="11.00" fill="#61b861"/>
<rect x="439.95" y="397.80" width="4.2" height="11.20" fill="#b2e7a7"/>
<rect x="439.95" y="396.50" width="4.2" height="1.30" fill="#e05d5e"/>
<rect x="439.95" y="385.00" width="4.2" height="11.50" fill="#ffb2b0"/>
<rect x="444.65" y="431.00" width="4.2" height="3.80" fill="#5799c7"/>
<rect x="444.65" y="425.50" width="4.2" height="5.50" fill="#ff9f4a"/>
<rect x="444.65" y="419.00" width="4.2" height="6.50" fill="#61b861"/>
<rect x="444.65" y="412.50" width="4.2" height="6.50" fill="#b2e7a7"/>
<rect x="444.65" y="411.00" width="4.2" height="1.50" fill="#e05d5e"/>
<rect x="444.65" y="403.50" width="4.2" height="7.50" fill="#ffb2b0"/>
<rect x="449.35" y="432.80" width="4.2" height="2.00" fill="#5799c7"/>
<rect x="449.35" y="429.50" width="4.2" height="3.30" fill="#ff9f4a"/>
<rect x="449.35" y="424.20" width="4.2" height="5.30" fill="#61b861"/>
<rect x="449.35" y="418.50" width="4.2" height="5.70" fill="#b2e7a7"/>
<rect x="449.35" y="412.20" width="4.2" height="6.30" fill="#ffb2b0"/>
<rect x="454.05" y="433.80" width="4.2" height="1.00" fill="#5799c7"/>
<rect x="454.05" y="430.00" width="4.2" height="3.80" fill="#ff9f4a"/>
<rect x="454.05" y="427.00" width="4.2" height="3.00" fill="#61b861"/>
<rect x="454.05" y="423.80" width="4.2" height="3.20" fill="#b2e7a7"/>
<rect x="454.05" y="420.20" width="4.2" height="3.60" fill="#ffb2b0"/>
<rect x="458.75" y="433.00" width="4.2" height="1.80" fill="#5799c7"/>
<rect x="458.75" y="431.00" width="4.2" height="2.00" fill="#ff9f4a"/>
<rect x="458.75" y="428.80" width="4.2" height="2.20" fill="#61b861"/>
<rect x="458.75" y="425.50" width="4.2" height="3.30" fill="#b2e7a7"/>
<rect x="458.75" y="422.20" width="4.2" height="3.30" fill="#ffb2b0"/>
<rect x="463.45" y="433.80" width="4.2" height="1.00" fill="#5799c7"/>
<rect x="463.45" y="431.80" width="4.2" height="2.00" fill="#ff9f4a"/>
<rect x="463.45" y="430.00" width="4.2" height="1.80" fill="#61b861"/>
<rect x="463.45" y="427.20" width="4.2" height="2.80" fill="#b2e7a7"/>
<rect x="463.45" y="425.00" width="4.2" height="2.20" fill="#ffb2b0"/>
<rect x="468.15" y="434.00" width="4.2" height="0.80" fill="#5799c7"/>
<rect x="468.15" y="432.80" width="4.2" height="1.20" fill="#ff9f4a"/>
<rect x="468.15" y="431.00" width="4.2" height="1.80" fill="#61b861"/>
<rect x="468.15" y="427.20" width="4.2" height="3.80" fill="#b2e7a7"/>
<rect x="468.15" y="425.00" width="4.2" height="2.20" fill="#ffb2b0"/>
<rect x="472.85" y="433.98" width="4.2" height="0.82" fill="#5799c7"/>
<rect x="472.85" y="433.17" width="4.2" height="0.82" fill="#ff9f4a"/>
<rect x="472.85" y="431.81" width="4.2" height="1.36" fill="#61b861"/>
<rect x="472.85" y="429.77" width="4.2" height="2.04" fill="#b2e7a7"/>
<rect x="472.85" y="428.00" width="4.2" height="1.77" fill="#ffb2b0"/>
<rect x="477.55" y="434.10" width="4.2" height="0.70" fill="#5799c7"/>
<rect x="477.55" y="433.41" width="4.2" height="0.70" fill="#ff9f4a"/>
<rect x="477.55" y="432.25" width="4.2" height="1.16" fill="#61b861"/>
<rect x="477.55" y="430.51" width="4.2" height="1.74" fill="#b2e7a7"/>
<rect x="477.55" y="429.00" width="4.2" height="1.51" fill="#ffb2b0"/>
<rect x="482.25" y="434.22" width="4.2" height="0.58" fill="#5799c7"/>
<rect x="482.25" y="433.65" width="4.2" height="0.58" fill="#ff9f4a"/>
<rect x="482.25" y="432.69" width="4.2" height="0.96" fill="#61b861"/>
<rect x="482.25" y="431.25" width="4.2" height="1.44" fill="#b2e7a7"/>
<rect x="482.25" y="430.00" width="4.2" height="1.25" fill="#ffb2b0"/>
<rect x="486.95" y="434.00" width="4.2" height="0.80" fill="#5799c7"/>
<rect x="486.95" y="433.00" width="4.2" height="1.00" fill="#ff9f4a"/>
<rect x="486.95" y="431.00" width="4.2" height="2.00" fill="#61b861"/>
<rect x="486.95" y="428.80" width="4.2" height="2.20" fill="#b2e7a7"/>
<rect x="486.95" y="425.80" width="4.2" height="3.00" fill="#ffb2b0"/>
<rect x="491.65" y="432.80" width="4.2" height="2.00" fill="#5799c7"/>
<rect x="491.65" y="431.00" width="4.2" height="1.80" fill="#ff9f4a"/>
<rect x="491.65" y="429.80" width="4.2" height="1.20" fill="#61b861"/>
<rect x="491.65" y="425.00" width="4.2" height="4.80" fill="#b2e7a7"/>
<rect x="491.65" y="422.00" width="4.2" height="3.00" fill="#ffb2b0"/>
<rect x="496.35" y="432.20" width="4.2" height="2.60" fill="#5799c7"/>
<rect x="496.35" y="429.50" width="4.2" height="2.70" fill="#ff9f4a"/>
<rect x="496.35" y="426.00" width="4.2" height="3.50" fill="#61b861"/>
<rect x="496.35" y="420.00" width="4.2" height="6.00" fill="#b2e7a7"/>
<rect x="496.35" y="415.00" width="4.2" height="5.00" fill="#ffb2b0"/>
<rect x="501.05" y="431.50" width="4.2" height="3.30" fill="#5799c7"/>
<rect x="501.05" y="428.00" width="4.2" height="3.50" fill="#ff9f4a"/>
<rect x="501.05" y="422.20" width="4.2" height="5.80" fill="#61b861"/>
<rect x="501.05" y="414.80" width="4.2" height="7.40" fill="#b2e7a7"/>
<rect x="501.05" y="413.80" width="4.2" height="1.00" fill="#e05d5e"/>
<rect x="501.05" y="407.00" width="4.2" height="6.80" fill="#ffb2b0"/>
<rect x="505.75" y="429.80" width="4.2" height="5.00" fill="#5799c7"/>
<rect x="505.75" y="423.00" width="4.2" height="6.80" fill="#ff9f4a"/>
<rect x="505.75" y="417.00" width="4.2" height="6.00" fill="#61b861"/>
<rect x="505.75" y="406.00" width="4.2" height="11.00" fill="#b2e7a7"/>
<rect x="505.75" y="405.00" width="4.2" height="1.00" fill="#e05d5e"/>
<rect x="505.75" y="394.30" width="4.2" height="10.70" fill="#ffb2b0"/>
<rect x="510.45" y="428.50" width="4.2" height="6.30" fill="#5799c7"/>
<rect x="510.45" y="422.80" width="4.2" height="5.70" fill="#ff9f4a"/>
<rect x="510.45" y="414.00" width="4.2" height="8.80" fill="#61b861"/>
<rect x="510.45" y="403.00" width="4.2" height="11.00" fill="#b2e7a7"/>
<rect x="510.45" y="402.20" width="4.2" height="0.80" fill="#e05d5e"/>
<rect x="510.45" y="392.20" width="4.2" height="10.00" fill="#ffb2b0"/>
<rect x="515.15" y="426.80" width="4.2" height="8.00" fill="#5799c7"/>
<rect x="515.15" y="419.20" width="4.2" height="7.60" fill="#ff9f4a"/>
<rect x="515.15" y="407.00" width="4.2" height="12.20" fill="#61b861"/>
<rect x="515.15" y="394.00" width="4.2" height="13.00" fill="#b2e7a7"/>
<rect x="515.15" y="392.80" width="4.2" height="1.20" fill="#e05d5e"/>
<rect x="515.15" y="377.20" width="4.2" height="15.60" fill="#ffb2b0"/>
<rect x="519.85" y="427.00" width="4.2" height="7.80" fill="#5799c7"/>
<rect x="519.85" y="420.00" width="4.2" height="7.00" fill="#ff9f4a"/>
<rect x="519.85" y="410.00" width="4.2" height="10.00" fill="#61b861"/>
<rect x="519.85" y="396.80" width="4.2" height="13.20" fill="#b2e7a7"/>
<rect x="519.85" y="395.80" width="4.2" height="1.00" fill="#e05d5e"/>
<rect x="519.85" y="384.20" width="4.2" height="11.60" fill="#ffb2b0"/>
<rect x="524.55" y="426.80" width="4.2" height="8.00" fill="#5799c7"/>
<rect x="524.55" y="421.00" width="4.2" height="5.80" fill="#ff9f4a"/>
<rect x="524.55" y="411.00" width="4.2" height="10.00" fill="#61b861"/>
<rect x="524.55" y="397.50" width="4.2" height="13.50" fill="#b2e7a7"/>
<rect x="524.55" y="396.30" width="4.2" height="1.20" fill="#e05d5e"/>
<rect x="524.55" y="383.00" width="4.2" height="13.30" fill="#ffb2b0"/>
<rect x="529.25" y="425.00" width="4.2" height="9.80" fill="#5799c7"/>
<rect x="529.25" y="417.00" width="4.2" height="8.00" fill="#ff9f4a"/>
<rect x="529.25" y="405.20" width="4.2" height="11.80" fill="#61b861"/>
<rect x="529.25" y="392.50" width="4.2" height="12.70" fill="#b2e7a7"/>
<rect x="529.25" y="391.00" width="4.2" height="1.50" fill="#e05d5e"/>
<rect x="529.25" y="374.80" width="4.2" height="16.20" fill="#ffb2b0"/>
<rect x="533.95" y="426.50" width="4.2" height="8.30" fill="#5799c7"/>
<rect x="533.95" y="417.20" width="4.2" height="9.30" fill="#ff9f4a"/>
<rect x="533.95" y="403.00" width="4.2" height="14.20" fill="#61b861"/>
<rect x="533.95" y="388.50" width="4.2" height="14.50" fill="#b2e7a7"/>
<rect x="533.95" y="387.00" width="4.2" height="1.50" fill="#e05d5e"/>
<rect x="533.95" y="370.20" width="4.2" height="16.80" fill="#ffb2b0"/>
<rect x="538.65" y="424.20" width="4.2" height="10.60" fill="#5799c7"/>
<rect x="538.65" y="416.80" width="4.2" height="7.40" fill="#ff9f4a"/>
<rect x="538.65" y="402.20" width="4.2" height="14.60" fill="#61b861"/>
<rect x="538.65" y="386.80" width="4.2" height="15.40" fill="#b2e7a7"/>
<rect x="538.65" y="385.50" width="4.2" height="1.30" fill="#e05d5e"/>
<rect x="538.65" y="367.00" width="4.2" height="18.50" fill="#ffb2b0"/>
<rect x="543.35" y="423.50" width="4.2" height="11.30" fill="#5799c7"/>
<rect x="543.35" y="414.00" width="4.2" height="9.50" fill="#ff9f4a"/>
<rect x="543.35" y="397.00" width="4.2" height="17.00" fill="#61b861"/>
<rect x="543.35" y="383.50" width="4.2" height="13.50" fill="#b2e7a7"/>
<rect x="543.35" y="382.00" width="4.2" height="1.50" fill="#e05d5e"/>
<rect x="543.35" y="363.50" width="4.2" height="18.50" fill="#ffb2b0"/>
<rect x="548.05" y="429.50" width="4.2" height="5.30" fill="#5799c7"/>
<rect x="548.05" y="420.50" width="4.2" height="9.00" fill="#c2d5ee"/>
<rect x="548.05" y="415.00" width="4.2" height="5.50" fill="#ff9f4a"/>
<rect x="548.05" y="404.00" width="4.2" height="11.00" fill="#61b861"/>
<rect x="548.05" y="392.80" width="4.2" height="11.20" fill="#b2e7a7"/>
<rect x="548.05" y="391.20" width="4.2" height="1.60" fill="#e05d5e"/>
<rect x="548.05" y="377.00" width="4.2" height="14.20" fill="#ffb2b0"/>
<rect x="552.75" y="431.00" width="4.2" height="3.80" fill="#5799c7"/>
<rect x="552.75" y="426.00" width="4.2" height="5.00" fill="#c2d5ee"/>
<rect x="552.75" y="420.50" width="4.2" height="5.50" fill="#ff9f4a"/>
<rect x="552.75" y="412.00" width="4.2" height="8.50" fill="#61b861"/>
<rect x="552.75" y="401.80" width="4.2" height="10.20" fill="#b2e7a7"/>
<rect x="552.75" y="400.80" width="4.2" height="1.00" fill="#e05d5e"/>
<rect x="552.75" y="391.00" width="4.2" height="9.80" fill="#ffb2b0"/>
<rect x="557.45" y="431.00" width="4.2" height="3.80" fill="#5799c7"/>
<rect x="557.45" y="427.00" width="4.2" height="4.00" fill="#ff9f4a"/>
<rect x="557.45" y="422.00" width="4.2" height="5.00" fill="#61b861"/>
<rect x="557.45" y="414.80" width="4.2" height="7.20" fill="#b2e7a7"/>
<rect x="557.45" y="414.00" width="4.2" height="0.80" fill="#e05d5e"/>
<rect x="557.45" y="406.20" width="4.2" height="7.80" fill="#ffb2b0"/>
<rect x="562.15" y="431.00" width="4.2" height="3.80" fill="#5799c7"/>
<rect x="562.15" y="427.00" width="4.2" height="4.00" fill="#ff9f4a"/>
<rect x="562.15" y="423.00" width="4.2" height="4.00" fill="#61b861"/>
<rect x="562.15" y="418.80" width="4.2" height="4.20" fill="#b2e7a7"/>
<rect x="562.15" y="411.80" width="4.2" height="7.00" fill="#ffb2b0"/>
<rect x="566.85" y="434.00" width="4.2" height="0.80" fill="#5799c7"/>
<rect x="566.85" y="432.00" width="4.2" height="2.00" fill="#ff9f4a"/>
<rect x="566.85" y="429.80" width="4.2" height="2.20" fill="#61b861"/>
<rect x="566.85" y="427.80" width="4.2" height="2.00" fill="#b2e7a7"/>
<rect x="566.85" y="425.00" width="4.2" height="2.80" fill="#ffb2b0"/>
<rect x="571.55" y="434.10" width="4.2" height="0.70" fill="#5799c7"/>
<rect x="571.55" y="433.41" width="4.2" height="0.70" fill="#ff9f4a"/>
<rect x="571.55" y="432.25" width="4.2" height="1.16" fill="#61b861"/>
<rect x="571.55" y="430.51" width="4.2" height="1.74" fill="#b2e7a7"/>
<rect x="571.55" y="429.00" width="4.2" height="1.51" fill="#ffb2b0"/>
<rect x="576.25" y="434.34" width="4.2" height="0.46" fill="#5799c7"/>
<rect x="576.25" y="433.89" width="4.2" height="0.46" fill="#ff9f4a"/>
<rect x="576.25" y="433.13" width="4.2" height="0.76" fill="#61b861"/>
<rect x="576.25" y="431.99" width="4.2" height="1.14" fill="#b2e7a7"/>
<rect x="576.25" y="431.00" width="4.2" height="0.99" fill="#ffb2b0"/>
<rect x="580.95" y="434.58" width="4.2" height="0.22" fill="#5799c7"/>
<rect x="580.95" y="434.37" width="4.2" height="0.22" fill="#ff9f4a"/>
<rect x="580.95" y="434.01" width="4.2" height="0.36" fill="#61b861"/>
<rect x="580.95" y="433.47" width="4.2" height="0.54" fill="#b2e7a7"/>
<rect x="580.95" y="433.00" width="4.2" height="0.47" fill="#ffb2b0"/>
<rect x="585.65" y="434.52" width="4.2" height="0.28" fill="#5799c7"/>
<rect x="585.65" y="434.25" width="4.2" height="0.28" fill="#ff9f4a"/>
<rect x="585.65" y="433.79" width="4.2" height="0.46" fill="#61b861"/>
<rect x="585.65" y="433.10" width="4.2" height="0.69" fill="#b2e7a7"/>
<rect x="585.65" y="432.50" width="4.2" height="0.60" fill="#ffb2b0"/>
<rect x="590.35" y="434.01" width="4.2" height="0.79" fill="#5799c7"/>
<rect x="590.35" y="433.22" width="4.2" height="0.79" fill="#ff9f4a"/>
<rect x="590.35" y="431.90" width="4.2" height="1.32" fill="#61b861"/>
<rect x="590.35" y="429.92" width="4.2" height="1.98" fill="#b2e7a7"/>
<rect x="590.35" y="428.20" width="4.2" height="1.72" fill="#ffb2b0"/>
<rect x="595.05" y="433.65" width="4.2" height="1.15" fill="#5799c7"/>
<rect x="595.05" y="432.50" width="4.2" height="1.15" fill="#ff9f4a"/>
<rect x="595.05" y="430.58" width="4.2" height="1.92" fill="#61b861"/>
<rect x="595.05" y="427.70" width="4.2" height="2.88" fill="#b2e7a7"/>
<rect x="595.05" y="425.20" width="4.2" height="2.50" fill="#ffb2b0"/>
<rect x="599.75" y="429.00" width="4.2" height="5.80" fill="#5799c7"/>
<rect x="599.75" y="424.80" width="4.2" height="4.20" fill="#ff9f4a"/>
<rect x="599.75" y="419.00" width="4.2" height="5.80" fill="#61b861"/>
<rect x="599.75" y="410.80" width="4.2" height="8.20" fill="#b2e7a7"/>
<rect x="599.75" y="410.00" width="4.2" height="0.80" fill="#e05d5e"/>
<rect x="599.75" y="396.80" width="4.2" height="13.20" fill="#ffb2b0"/>
<rect x="604.45" y="427.50" width="4.2" height="7.30" fill="#5799c7"/>
<rect x="604.45" y="421.00" width="4.2" height="6.50" fill="#ff9f4a"/>
<rect x="604.45" y="409.00" width="4.2" height="12.00" fill="#61b861"/>
<rect x="604.45" y="390.80" width="4.2" height="18.20" fill="#b2e7a7"/>
<rect x="604.45" y="389.00" width="4.2" height="1.80" fill="#e05d5e"/>
<rect x="604.45" y="376.50" width="4.2" height="12.50" fill="#ffb2b0"/>
<rect x="609.15" y="420.00" width="4.2" height="14.80" fill="#5799c7"/>
<rect x="609.15" y="418.00" width="4.2" height="2.00" fill="#c2d5ee"/>
<rect x="609.15" y="402.00" width="4.2" height="16.00" fill="#ff9f4a"/>
<rect x="609.15" y="381.80" width="4.2" height="20.20" fill="#61b861"/>
<rect x="609.15" y="363.00" width="4.2" height="18.80" fill="#b2e7a7"/>
<rect x="609.15" y="359.00" width="4.2" height="4.00" fill="#e05d5e"/>
<rect x="609.15" y="338.00" width="4.2" height="21.00" fill="#ffb2b0"/>
<rect x="613.85" y="423.00" width="4.2" height="11.80" fill="#5799c7"/>
<rect x="613.85" y="422.00" width="4.2" height="1.00" fill="#c2d5ee"/>
<rect x="613.85" y="400.00" width="4.2" height="22.00" fill="#ff9f4a"/>
<rect x="613.85" y="380.80" width="4.2" height="19.20" fill="#61b861"/>
<rect x="613.85" y="359.00" width="4.2" height="21.80" fill="#b2e7a7"/>
<rect x="613.85" y="353.00" width="4.2" height="6.00" fill="#e05d5e"/>
<rect x="613.85" y="332.50" width="4.2" height="20.50" fill="#ffb2b0"/>
<rect x="618.55" y="421.50" width="4.2" height="13.30" fill="#5799c7"/>
<rect x="618.55" y="419.80" width="4.2" height="1.70" fill="#c2d5ee"/>
<rect x="618.55" y="395.80" width="4.2" height="24.00" fill="#ff9f4a"/>
<rect x="618.55" y="377.00" width="4.2" height="18.80" fill="#61b861"/>
<rect x="618.55" y="355.00" width="4.2" height="22.00" fill="#b2e7a7"/>
<rect x="618.55" y="349.00" width="4.2" height="6.00" fill="#e05d5e"/>
<rect x="618.55" y="327.00" width="4.2" height="22.00" fill="#ffb2b0"/>
<rect x="623.25" y="422.00" width="4.2" height="12.80" fill="#5799c7"/>
<rect x="623.25" y="397.00" width="4.2" height="25.00" fill="#ff9f4a"/>
<rect x="623.25" y="379.00" width="4.2" height="18.00" fill="#61b861"/>
<rect x="623.25" y="359.00" width="4.2" height="20.00" fill="#b2e7a7"/>
<rect x="623.25" y="352.00" width="4.2" height="7.00" fill="#e05d5e"/>
<rect x="623.25" y="332.00" width="4.2" height="20.00" fill="#ffb2b0"/>
<rect x="627.95" y="422.80" width="4.2" height="12.00" fill="#5799c7"/>
<rect x="627.95" y="420.50" width="4.2" height="2.30" fill="#c2d5ee"/>
<rect x="627.95" y="397.50" width="4.2" height="23.00" fill="#ff9f4a"/>
<rect x="627.95" y="380.00" width="4.2" height="17.50" fill="#61b861"/>
<rect x="627.95" y="360.80" width="4.2" height="19.20" fill="#b2e7a7"/>
<rect x="627.95" y="355.00" width="4.2" height="5.80" fill="#e05d5e"/>
<rect x="627.95" y="338.00" width="4.2" height="17.00" fill="#ffb2b0"/>
<rect x="632.65" y="422.80" width="4.2" height="12.00" fill="#5799c7"/>
<rect x="632.65" y="421.00" width="4.2" height="1.80" fill="#c2d5ee"/>
<rect x="632.65" y="402.00" width="4.2" height="19.00" fill="#ff9f4a"/>
<rect x="632.65" y="384.00" width="4.2" height="18.00" fill="#61b861"/>
<rect x="632.65" y="363.00" width="4.2" height="21.00" fill="#b2e7a7"/>
<rect x="632.65" y="359.00" width="4.2" height="4.00" fill="#e05d5e"/>
<rect x="632.65" y="337.00" width="4.2" height="22.00" fill="#ffb2b0"/>
<rect x="637.35" y="419.00" width="4.2" height="15.80" fill="#5799c7"/>
<rect x="637.35" y="418.00" width="4.2" height="1.00" fill="#c2d5ee"/>
<rect x="637.35" y="396.50" width="4.2" height="21.50" fill="#ff9f4a"/>
<rect x="637.35" y="375.00" width="4.2" height="21.50" fill="#61b861"/>
<rect x="637.35" y="352.20" width="4.2" height="22.80" fill="#b2e7a7"/>
<rect x="637.35" y="347.00" width="4.2" height="5.20" fill="#e05d5e"/>
<rect x="637.35" y="321.80" width="4.2" height="25.20" fill="#ffb2b0"/>
<rect x="642.05" y="420.80" width="4.2" height="14.00" fill="#5799c7"/>
<rect x="642.05" y="419.50" width="4.2" height="1.30" fill="#c2d5ee"/>
<rect x="642.05" y="396.00" width="4.2" height="23.50" fill="#ff9f4a"/>
<rect x="642.05" y="371.00" width="4.2" height="25.00" fill="#61b861"/>
<rect x="642.05" y="344.00" width="4.2" height="27.00" fill="#b2e7a7"/>
<rect x="642.05" y="338.00" width="4.2" height="6.00" fill="#e05d5e"/>
<rect x="642.05" y="314.50" width="4.2" height="23.50" fill="#ffb2b0"/>
<rect x="646.75" y="417.00" width="4.2" height="17.80" fill="#5799c7"/>
<rect x="646.75" y="414.50" width="4.2" height="2.50" fill="#c2d5ee"/>
<rect x="646.75" y="391.50" width="4.2" height="23.00" fill="#ff9f4a"/>
<rect x="646.75" y="369.80" width="4.2" height="21.70" fill="#61b861"/>
<rect x="646.75" y="344.00" width="4.2" height="25.80" fill="#b2e7a7"/>
<rect x="646.75" y="339.00" width="4.2" height="5.00" fill="#e05d5e"/>
<rect x="646.75" y="311.00" width="4.2" height="28.00" fill="#ffb2b0"/>
<rect x="651.45" y="418.80" width="4.2" height="16.00" fill="#5799c7"/>
<rect x="651.45" y="417.20" width="4.2" height="1.60" fill="#c2d5ee"/>
<rect x="651.45" y="392.50" width="4.2" height="24.70" fill="#ff9f4a"/>
<rect x="651.45" y="368.00" width="4.2" height="24.50" fill="#61b861"/>
<rect x="651.45" y="344.00" width="4.2" height="24.00" fill="#b2e7a7"/>
<rect x="651.45" y="338.00" width="4.2" height="6.00" fill="#e05d5e"/>
<rect x="651.45" y="314.00" width="4.2" height="24.00" fill="#ffb2b0"/>
<rect x="656.15" y="419.50" width="4.2" height="15.30" fill="#5799c7"/>
<rect x="656.15" y="403.00" width="4.2" height="16.50" fill="#ff9f4a"/>
<rect x="656.15" y="383.00" width="4.2" height="20.00" fill="#61b861"/>
<rect x="656.15" y="364.20" width="4.2" height="18.80" fill="#b2e7a7"/>
<rect x="656.15" y="361.00" width="4.2" height="3.20" fill="#e05d5e"/>
<rect x="656.15" y="341.80" width="4.2" height="19.20" fill="#ffb2b0"/>
<rect x="660.85" y="423.00" width="4.2" height="11.80" fill="#5799c7"/>
<rect x="660.85" y="422.00" width="4.2" height="1.00" fill="#c2d5ee"/>
<rect x="660.85" y="412.80" width="4.2" height="9.20" fill="#ff9f4a"/>
<rect x="660.85" y="397.00" width="4.2" height="15.80" fill="#61b861"/>
<rect x="660.85" y="380.80" width="4.2" height="16.20" fill="#b2e7a7"/>
<rect x="660.85" y="379.00" width="4.2" height="1.80" fill="#e05d5e"/>
<rect x="660.85" y="361.20" width="4.2" height="17.80" fill="#ffb2b0"/>
<rect x="665.55" y="427.80" width="4.2" height="7.00" fill="#5799c7"/>
<rect x="665.55" y="421.00" width="4.2" height="6.80" fill="#ff9f4a"/>
<rect x="665.55" y="412.00" width="4.2" height="9.00" fill="#61b861"/>
<rect x="665.55" y="402.00" width="4.2" height="10.00" fill="#b2e7a7"/>
<rect x="665.55" y="400.50" width="4.2" height="1.50" fill="#e05d5e"/>
<rect x="665.55" y="389.50" width="4.2" height="11.00" fill="#ffb2b0"/>
<rect x="670.25" y="430.00" width="4.2" height="4.80" fill="#5799c7"/>
<rect x="670.25" y="425.00" width="4.2" height="5.00" fill="#ff9f4a"/>
<rect x="670.25" y="417.00" width="4.2" height="8.00" fill="#61b861"/>
<rect x="670.25" y="410.00" width="4.2" height="7.00" fill="#b2e7a7"/>
<rect x="670.25" y="403.00" width="4.2" height="7.00" fill="#ffb2b0"/>
<rect x="674.95" y="429.00" width="4.2" height="5.80" fill="#5799c7"/>
<rect x="674.95" y="428.50" width="4.2" height="0.50" fill="#ff9f4a"/>
<rect x="674.95" y="422.50" width="4.2" height="6.00" fill="#61b861"/>
<rect x="674.95" y="416.80" width="4.2" height="5.70" fill="#b2e7a7"/>
<rect x="674.95" y="411.00" width="4.2" height="5.80" fill="#ffb2b0"/>
<rect x="679.65" y="433.50" width="4.2" height="1.30" fill="#5799c7"/>
<rect x="679.65" y="431.00" width="4.2" height="2.50" fill="#ff9f4a"/>
<rect x="679.65" y="426.00" width="4.2" height="5.00" fill="#61b861"/>
<rect x="679.65" y="417.50" width="4.2" height="8.50" fill="#b2e7a7"/>
<rect x="679.65" y="415.00" width="4.2" height="2.50" fill="#ffb2b0"/>
<rect x="684.35" y="434.34" width="4.2" height="0.46" fill="#5799c7"/>
<rect x="684.35" y="433.89" width="4.2" height="0.46" fill="#ff9f4a"/>
<rect x="684.35" y="433.13" width="4.2" height="0.76" fill="#61b861"/>
<rect x="684.35" y="431.99" width="4.2" height="1.14" fill="#b2e7a7"/>
<rect x="684.35" y="431.00" width="4.2" height="0.99" fill="#ffb2b0"/>
<line x1="120.5" x2="120.5" y1="293.0" y2="434.8" stroke="#000" stroke-width="1"/>
<text x="116.5" y="297.0" text-anchor="end" class="t b">1292</text>
<text x="116.5" y="439.3" text-anchor="end" class="t">0</text>
<text x="116.5" y="384.3" text-anchor="end" class="t">500</text>
<text x="116.5" y="329.3" text-anchor="end" class="t">1000</text>
<text x="221.5" y="451" text-anchor="middle" class="t">25-Feb</text>
<text x="324.5" y="451" text-anchor="middle" class="t">26-Feb</text>
<text x="427.5" y="451" text-anchor="middle" class="t">27-Feb</text>
<text x="531.5" y="451" text-anchor="middle" class="t">28-Feb</text>
<text x="634.5" y="451" text-anchor="middle" class="t">29-Feb</text>
<text x="737.5" y="451" text-anchor="middle" class="t">01-Mar</text>
<text x="840.5" y="451" text-anchor="middle" class="t">02-Mar</text>
<circle cx="370" cy="278" r="5" fill="#1f77b4" stroke="#1f77b4" stroke-width="2"/>
<text x="378.5" y="282.2" class="t">DVa1b</text>
<circle cx="440" cy="278" r="5" fill="#aec7e8" stroke="#aec7e8" stroke-width="2"/>
<text x="448.5" y="282.2" class="t">DVa2</text>
<circle cx="503" cy="278" r="5" fill="#ff7f0e" stroke="#ff7f0e" stroke-width="2"/>
<text x="511.5" y="282.2" class="t">DVb12b</text>
<circle cx="580" cy="278" r="5" fill="#ffbb78" stroke="#ffbb78" stroke-width="2"/>
<text x="588.5" y="282.2" class="t">DVb3</text>
<circle cx="643" cy="278" r="5" fill="#2ca02c" stroke="#2ca02c" stroke-width="2"/>
<text x="651.5" y="282.2" class="t">DVc13b</text>
<circle cx="719" cy="278" r="5" fill="#98df8a" stroke="#98df8a" stroke-width="2"/>
<text x="727.5" y="282.2" class="t">DVc2</text>
<circle cx="781" cy="278" r="5" fill="#d62728" stroke="#d62728" stroke-width="2"/>
<text x="789.5" y="282.2" class="t">DVd1b</text>
<circle cx="851" cy="278" r="5" fill="#ff9896" stroke="#ff9896" stroke-width="2"/>
<text x="859.5" y="282.2" class="t">DVd3</text>
</svg>
<svg class="chart" style="left:955px;top:265px" width="890" height="200" viewBox="955 265 890 200">
<line x1="1126.5" x2="1126.5" y1="293.0" y2="434.8" class="g"/>
<line x1="1229.5" x2="1229.5" y1="293.0" y2="434.8" class="g"/>
<line x1="1332.5" x2="1332.5" y1="293.0" y2="434.8" class="g"/>
<line x1="1436.5" x2="1436.5" y1="293.0" y2="434.8" class="g"/>
<line x1="1539.5" x2="1539.5" y1="293.0" y2="434.8" class="g"/>
<line x1="1642.5" x2="1642.5" y1="293.0" y2="434.8" class="g"/>
<line x1="1745.5" x2="1745.5" y1="293.0" y2="434.8" class="g"/>
<line x1="1025.5" x2="1819.5" y1="435.5" y2="435.5" class="g"/>
<line x1="1025.5" x2="1819.5" y1="374.5" y2="374.5" class="g"/>
<line x1="1025.5" x2="1819.5" y1="313.5" y2="313.5" class="g"/>
<rect x="1053.55" y="434.50" width="4.2" height="0.30" fill="#5799c7"/>
<rect x="1053.55" y="433.00" width="4.2" height="1.50" fill="#c2d5ee"/>
<rect x="1053.55" y="430.80" width="4.2" height="2.20" fill="#ff9f4a"/>
<rect x="1053.55" y="429.00" width="4.2" height="1.80" fill="#ffcc9a"/>
<rect x="1058.25" y="431.50" width="4.2" height="3.30" fill="#5799c7"/>
<rect x="1058.25" y="430.80" width="4.2" height="0.70" fill="#c2d5ee"/>
<rect x="1058.25" y="420.80" width="4.2" height="10.00" fill="#ff9f4a"/>
<rect x="1058.25" y="416.80" width="4.2" height="4.00" fill="#ffcc9a"/>
<rect x="1062.95" y="423.00" width="4.2" height="11.80" fill="#5799c7"/>
<rect x="1062.95" y="414.00" width="4.2" height="9.00" fill="#c2d5ee"/>
<rect x="1062.95" y="395.00" width="4.2" height="19.00" fill="#ff9f4a"/>
<rect x="1062.95" y="382.00" width="4.2" height="13.00" fill="#ffcc9a"/>
<rect x="1067.65" y="426.00" width="4.2" height="8.80" fill="#5799c7"/>
<rect x="1067.65" y="423.00" width="4.2" height="3.00" fill="#c2d5ee"/>
<rect x="1067.65" y="402.00" width="4.2" height="21.00" fill="#ff9f4a"/>
<rect x="1067.65" y="394.00" width="4.2" height="8.00" fill="#ffcc9a"/>
<rect x="1072.35" y="427.00" width="4.2" height="7.80" fill="#5799c7"/>
<rect x="1072.35" y="423.50" width="4.2" height="3.50" fill="#c2d5ee"/>
<rect x="1072.35" y="403.80" width="4.2" height="19.70" fill="#ff9f4a"/>
<rect x="1072.35" y="396.00" width="4.2" height="7.80" fill="#ffcc9a"/>
<rect x="1077.05" y="419.00" width="4.2" height="15.80" fill="#5799c7"/>
<rect x="1077.05" y="415.00" width="4.2" height="4.00" fill="#c2d5ee"/>
<rect x="1077.05" y="402.00" width="4.2" height="13.00" fill="#ff9f4a"/>
<rect x="1077.05" y="398.00" width="4.2" height="4.00" fill="#ffcc9a"/>
<rect x="1081.75" y="427.00" width="4.2" height="7.80" fill="#5799c7"/>
<rect x="1081.75" y="423.50" width="4.2" height="3.50" fill="#c2d5ee"/>
<rect x="1081.75" y="402.00" width="4.2" height="21.50" fill="#ff9f4a"/>
<rect x="1081.75" y="394.00" width="4.2" height="8.00" fill="#ffcc9a"/>
<rect x="1086.45" y="426.00" width="4.2" height="8.80" fill="#5799c7"/>
<rect x="1086.45" y="420.00" width="4.2" height="6.00" fill="#c2d5ee"/>
<rect x="1086.45" y="381.00" width="4.2" height="39.00" fill="#ff9f4a"/>
<rect x="1086.45" y="372.20" width="4.2" height="8.80" fill="#ffcc9a"/>
<rect x="1091.15" y="398.00" width="4.2" height="36.80" fill="#5799c7"/>
<rect x="1091.15" y="392.20" width="4.2" height="5.80" fill="#c2d5ee"/>
<rect x="1091.15" y="369.00" width="4.2" height="23.20" fill="#ff9f4a"/>
<rect x="1091.15" y="332.00" width="4.2" height="37.00" fill="#ffcc9a"/>
<rect x="1095.85" y="415.00" width="4.2" height="19.80" fill="#5799c7"/>
<rect x="1095.85" y="409.50" width="4.2" height="5.50" fill="#c2d5ee"/>
<rect x="1095.85" y="384.00" width="4.2" height="25.50" fill="#ff9f4a"/>
<rect x="1095.85" y="367.00" width="4.2" height="17.00" fill="#ffcc9a"/>
<rect x="1100.55" y="419.00" width="4.2" height="15.80" fill="#5799c7"/>
<rect x="1100.55" y="411.20" width="4.2" height="7.80" fill="#c2d5ee"/>
<rect x="1100.55" y="362.00" width="4.2" height="49.20" fill="#ff9f4a"/>
<rect x="1100.55" y="342.10" width="4.2" height="19.90" fill="#ffcc9a"/>
<rect x="1105.25" y="428.00" width="4.2" height="6.80" fill="#5799c7"/>
<rect x="1105.25" y="421.80" width="4.2" height="6.20" fill="#c2d5ee"/>
<rect x="1105.25" y="397.50" width="4.2" height="24.30" fill="#ff9f4a"/>
<rect x="1105.25" y="387.00" width="4.2" height="10.50" fill="#ffcc9a"/>
<rect x="1109.95" y="430.00" width="4.2" height="4.80" fill="#5799c7"/>
<rect x="1109.95" y="423.50" width="4.2" height="6.50" fill="#c2d5ee"/>
<rect x="1109.95" y="402.80" width="4.2" height="20.70" fill="#ff9f4a"/>
<rect x="1109.95" y="399.80" width="4.2" height="3.00" fill="#ffcc9a"/>
<rect x="1114.65" y="425.00" width="4.2" height="9.80" fill="#5799c7"/>
<rect x="1114.65" y="422.20" width="4.2" height="2.80" fill="#c2d5ee"/>
<rect x="1114.65" y="415.80" width="4.2" height="6.40" fill="#ff9f4a"/>
<rect x="1114.65" y="415.00" width="4.2" height="0.80" fill="#ffcc9a"/>
<rect x="1119.35" y="429.00" width="4.2" height="5.80" fill="#5799c7"/>
<rect x="1119.35" y="426.50" width="4.2" height="2.50" fill="#c2d5ee"/>
<rect x="1119.35" y="411.50" width="4.2" height="15.00" fill="#ff9f4a"/>
<rect x="1119.35" y="409.00" width="4.2" height="2.50" fill="#ffcc9a"/>
<rect x="1124.05" y="431.20" width="4.2" height="3.60" fill="#ffcc9a"/>
<rect x="1138.15" y="433.80" width="4.2" height="1.00" fill="#c2d5ee"/>
<rect x="1166.35" y="431.80" width="4.2" height="3.00" fill="#5799c7"/>
<rect x="1166.35" y="428.00" width="4.2" height="3.80" fill="#ff9f4a"/>
<rect x="1166.35" y="424.00" width="4.2" height="4.00" fill="#ffcc9a"/>
<rect x="1171.05" y="430.20" width="4.2" height="4.60" fill="#5799c7"/>
<rect x="1171.05" y="424.00" width="4.2" height="6.20" fill="#ff9f4a"/>
<rect x="1171.05" y="417.20" width="4.2" height="6.80" fill="#ffcc9a"/>
<rect x="1175.75" y="411.00" width="4.2" height="23.80" fill="#5799c7"/>
<rect x="1175.75" y="406.50" width="4.2" height="4.50" fill="#c2d5ee"/>
<rect x="1175.75" y="385.00" width="4.2" height="21.50" fill="#ff9f4a"/>
<rect x="1175.75" y="365.50" width="4.2" height="19.50" fill="#ffcc9a"/>
<rect x="1180.45" y="420.80" width="4.2" height="14.00" fill="#5799c7"/>
<rect x="1180.45" y="415.50" width="4.2" height="5.30" fill="#c2d5ee"/>
<rect x="1180.45" y="395.80" width="4.2" height="19.70" fill="#ff9f4a"/>
<rect x="1180.45" y="387.50" width="4.2" height="8.30" fill="#ffcc9a"/>
<rect x="1185.15" y="430.20" width="4.2" height="4.60" fill="#5799c7"/>
<rect x="1185.15" y="420.00" width="4.2" height="10.20" fill="#c2d5ee"/>
<rect x="1185.15" y="406.80" width="4.2" height="13.20" fill="#ff9f4a"/>
<rect x="1185.15" y="405.20" width="4.2" height="1.60" fill="#ffcc9a"/>
<rect x="1189.85" y="428.80" width="4.2" height="6.00" fill="#5799c7"/>
<rect x="1189.85" y="417.00" width="4.2" height="11.80" fill="#c2d5ee"/>
<rect x="1189.85" y="394.00" width="4.2" height="23.00" fill="#ff9f4a"/>
<rect x="1189.85" y="385.80" width="4.2" height="8.20" fill="#ffcc9a"/>
<rect x="1194.55" y="420.80" width="4.2" height="14.00" fill="#5799c7"/>
<rect x="1194.55" y="415.00" width="4.2" height="5.80" fill="#c2d5ee"/>
<rect x="1194.55" y="392.80" width="4.2" height="22.20" fill="#ff9f4a"/>
<rect x="1194.55" y="376.00" width="4.2" height="16.80" fill="#ffcc9a"/>
<rect x="1199.25" y="424.00" width="4.2" height="10.80" fill="#5799c7"/>
<rect x="1199.25" y="420.20" width="4.2" height="3.80" fill="#c2d5ee"/>
<rect x="1199.25" y="403.00" width="4.2" height="17.20" fill="#ff9f4a"/>
<rect x="1199.25" y="392.00" width="4.2" height="11.00" fill="#ffcc9a"/>
<rect x="1203.95" y="408.20" width="4.2" height="26.60" fill="#5799c7"/>
<rect x="1203.95" y="401.50" width="4.2" height="6.70" fill="#c2d5ee"/>
<rect x="1203.95" y="376.00" width="4.2" height="25.50" fill="#ff9f4a"/>
<rect x="1203.95" y="342.60" width="4.2" height="33.40" fill="#ffcc9a"/>
<rect x="1208.65" y="415.00" width="4.2" height="19.80" fill="#5799c7"/>
<rect x="1208.65" y="403.50" width="4.2" height="11.50" fill="#c2d5ee"/>
<rect x="1208.65" y="385.00" width="4.2" height="18.50" fill="#ff9f4a"/>
<rect x="1208.65" y="334.50" width="4.2" height="50.50" fill="#ffcc9a"/>
<rect x="1213.35" y="423.00" width="4.2" height="11.80" fill="#5799c7"/>
<rect x="1213.35" y="414.50" width="4.2" height="8.50" fill="#c2d5ee"/>
<rect x="1213.35" y="394.00" width="4.2" height="20.50" fill="#ff9f4a"/>
<rect x="1213.35" y="382.20" width="4.2" height="11.80" fill="#ffcc9a"/>
<rect x="1218.05" y="421.00" width="4.2" height="13.80" fill="#5799c7"/>
<rect x="1218.05" y="410.80" width="4.2" height="10.20" fill="#c2d5ee"/>
<rect x="1218.05" y="386.50" width="4.2" height="24.30" fill="#ff9f4a"/>
<rect x="1218.05" y="380.20" width="4.2" height="6.30" fill="#ffcc9a"/>
<rect x="1222.75" y="425.50" width="4.2" height="9.30" fill="#5799c7"/>
<rect x="1222.75" y="422.20" width="4.2" height="3.30" fill="#c2d5ee"/>
<rect x="1222.75" y="397.50" width="4.2" height="24.70" fill="#ff9f4a"/>
<rect x="1222.75" y="392.20" width="4.2" height="5.30" fill="#ffcc9a"/>
<rect x="1227.45" y="432.00" width="4.2" height="2.80" fill="#5799c7"/>
<rect x="1227.45" y="429.50" width="4.2" height="2.50" fill="#c2d5ee"/>
<rect x="1227.45" y="420.00" width="4.2" height="9.50" fill="#ff9f4a"/>
<rect x="1227.45" y="417.00" width="4.2" height="3.00" fill="#ffcc9a"/>
<rect x="1232.15" y="434.00" width="4.2" height="0.80" fill="#5799c7"/>
<rect x="1232.15" y="429.80" width="4.2" height="4.20" fill="#c2d5ee"/>
<rect x="1232.15" y="423.80" width="4.2" height="6.00" fill="#ff9f4a"/>
<rect x="1232.15" y="423.00" width="4.2" height="0.80" fill="#ffcc9a"/>
<rect x="1236.85" y="434.20" width="4.2" height="0.60" fill="#5799c7"/>
<rect x="1236.85" y="431.80" width="4.2" height="2.40" fill="#ff9f4a"/>
<rect x="1236.85" y="430.80" width="4.2" height="1.00" fill="#ffcc9a"/>
<rect x="1283.85" y="434.20" width="4.2" height="0.60" fill="#5799c7"/>
<rect x="1283.85" y="434.00" width="4.2" height="0.20" fill="#ffcc9a"/>
<rect x="1288.55" y="433.20" width="4.2" height="1.60" fill="#5799c7"/>
<rect x="1288.55" y="431.80" width="4.2" height="1.40" fill="#ff9f4a"/>
<rect x="1288.55" y="430.20" width="4.2" height="1.60" fill="#ffcc9a"/>
<rect x="1293.25" y="431.80" width="4.2" height="3.00" fill="#5799c7"/>
<rect x="1293.25" y="428.50" width="4.2" height="3.30" fill="#c2d5ee"/>
<rect x="1293.25" y="419.00" width="4.2" height="9.50" fill="#ff9f4a"/>
<rect x="1293.25" y="417.00" width="4.2" height="2.00" fill="#ffcc9a"/>
<rect x="1297.95" y="422.20" width="4.2" height="12.60" fill="#5799c7"/>
<rect x="1297.95" y="409.50" width="4.2" height="12.70" fill="#c2d5ee"/>
<rect x="1297.95" y="395.50" width="4.2" height="14.00" fill="#ff9f4a"/>
<rect x="1297.95" y="394.80" width="4.2" height="0.70" fill="#ffcc9a"/>
<rect x="1302.65" y="410.00" width="4.2" height="24.80" fill="#5799c7"/>
<rect x="1302.65" y="406.00" width="4.2" height="4.00" fill="#c2d5ee"/>
<rect x="1302.65" y="398.00" width="4.2" height="8.00" fill="#ff9f4a"/>
<rect x="1302.65" y="392.20" width="4.2" height="5.80" fill="#ffcc9a"/>
<rect x="1307.35" y="429.00" width="4.2" height="5.80" fill="#5799c7"/>
<rect x="1307.35" y="427.00" width="4.2" height="2.00" fill="#c2d5ee"/>
<rect x="1307.35" y="402.00" width="4.2" height="25.00" fill="#ff9f4a"/>
<rect x="1307.35" y="391.20" width="4.2" height="10.80" fill="#ffcc9a"/>
<rect x="1312.05" y="433.00" width="4.2" height="1.80" fill="#5799c7"/>
<rect x="1312.05" y="428.00" width="4.2" height="5.00" fill="#ff9f4a"/>
<rect x="1312.05" y="427.50" width="4.2" height="0.50" fill="#ffcc9a"/>
<rect x="1316.75" y="434.20" width="4.2" height="0.60" fill="#5799c7"/>
<rect x="1316.75" y="434.00" width="4.2" height="0.20" fill="#ff9f4a"/>
<rect x="1316.75" y="433.80" width="4.2" height="0.20" fill="#ffcc9a"/>
<rect x="1321.45" y="434.40" width="4.2" height="0.40" fill="#5799c7"/>
<rect x="1321.45" y="432.50" width="4.2" height="1.90" fill="#ff9f4a"/>
<rect x="1326.15" y="432.50" width="4.2" height="2.30" fill="#ff9f4a"/>
<rect x="1330.85" y="433.00" width="4.2" height="1.80" fill="#5799c7"/>
<rect x="1330.85" y="430.00" width="4.2" height="3.00" fill="#ff9f4a"/>
<rect x="1330.85" y="428.20" width="4.2" height="1.80" fill="#ffcc9a"/>
<rect x="1335.55" y="432.80" width="4.2" height="2.00" fill="#ffcc9a"/>
<rect x="1340.25" y="434.00" width="4.2" height="0.80" fill="#ff9f4a"/>
<rect x="1344.95" y="434.00" width="4.2" height="0.80" fill="#ff9f4a"/>
<rect x="1406.05" y="433.00" width="4.2" height="1.80" fill="#5799c7"/>
<rect x="1415.45" y="433.80" width="4.2" height="1.00" fill="#ffcc9a"/>
<rect x="1424.85" y="426.80" width="4.2" height="8.00" fill="#ff9f4a"/>
<rect x="1429.55" y="434.20" width="4.2" height="0.60" fill="#5799c7"/>
<rect x="1429.55" y="433.50" width="4.2" height="0.70" fill="#ff9f4a"/>
<rect x="1429.55" y="433.00" width="4.2" height="0.50" fill="#ffcc9a"/>
<rect x="1434.25" y="434.00" width="4.2" height="0.80" fill="#ff9f4a"/>
<rect x="1438.95" y="434.40" width="4.2" height="0.40" fill="#5799c7"/>
<rect x="1438.95" y="426.00" width="4.2" height="8.40" fill="#ff9f4a"/>
<rect x="1443.65" y="430.00" width="4.2" height="4.80" fill="#5799c7"/>
<rect x="1443.65" y="425.20" width="4.2" height="4.80" fill="#c2d5ee"/>
<rect x="1443.65" y="406.80" width="4.2" height="18.40" fill="#ff9f4a"/>
<rect x="1443.65" y="403.20" width="4.2" height="3.60" fill="#ffcc9a"/>
<rect x="1448.35" y="432.80" width="4.2" height="2.00" fill="#5799c7"/>
<rect x="1448.35" y="431.80" width="4.2" height="1.00" fill="#c2d5ee"/>
<rect x="1448.35" y="423.50" width="4.2" height="8.30" fill="#ff9f4a"/>
<rect x="1448.35" y="422.80" width="4.2" height="0.70" fill="#ffcc9a"/>
<rect x="1453.05" y="432.80" width="4.2" height="2.00" fill="#5799c7"/>
<rect x="1453.05" y="432.00" width="4.2" height="0.80" fill="#c2d5ee"/>
<rect x="1453.05" y="426.80" width="4.2" height="5.20" fill="#ff9f4a"/>
<rect x="1453.05" y="424.20" width="4.2" height="2.60" fill="#ffcc9a"/>
<rect x="1457.75" y="431.00" width="4.2" height="3.80" fill="#5799c7"/>
<rect x="1457.75" y="428.80" width="4.2" height="2.20" fill="#ff9f4a"/>
<rect x="1457.75" y="423.20" width="4.2" height="5.60" fill="#ffcc9a"/>
<rect x="1462.45" y="433.80" width="4.2" height="1.00" fill="#ff9f4a"/>
<rect x="1467.15" y="434.40" width="4.2" height="0.40" fill="#5799c7"/>
<rect x="1467.15" y="434.20" width="4.2" height="0.20" fill="#ff9f4a"/>
<rect x="1467.15" y="434.00" width="4.2" height="0.20" fill="#ffcc9a"/>
<rect x="1504.75" y="434.00" width="4.2" height="0.80" fill="#5799c7"/>
<rect x="1504.75" y="430.00" width="4.2" height="4.00" fill="#c2d5ee"/>
<rect x="1504.75" y="425.80" width="4.2" height="4.20" fill="#ff9f4a"/>
<rect x="1504.75" y="424.00" width="4.2" height="1.80" fill="#ffcc9a"/>
<rect x="1509.45" y="431.00" width="4.2" height="3.80" fill="#5799c7"/>
<rect x="1509.45" y="430.00" width="4.2" height="1.00" fill="#c2d5ee"/>
<rect x="1509.45" y="421.80" width="4.2" height="8.20" fill="#ff9f4a"/>
<rect x="1509.45" y="416.00" width="4.2" height="5.80" fill="#ffcc9a"/>
<rect x="1514.15" y="410.00" width="4.2" height="24.80" fill="#5799c7"/>
<rect x="1514.15" y="407.50" width="4.2" height="2.50" fill="#c2d5ee"/>
<rect x="1514.15" y="386.50" width="4.2" height="21.00" fill="#ff9f4a"/>
<rect x="1514.15" y="369.00" width="4.2" height="17.50" fill="#ffcc9a"/>
<rect x="1518.85" y="426.00" width="4.2" height="8.80" fill="#5799c7"/>
<rect x="1518.85" y="425.00" width="4.2" height="1.00" fill="#c2d5ee"/>
<rect x="1518.85" y="392.80" width="4.2" height="32.20" fill="#ff9f4a"/>
<rect x="1518.85" y="385.80" width="4.2" height="7.00" fill="#ffcc9a"/>
<rect x="1523.55" y="427.00" width="4.2" height="7.80" fill="#5799c7"/>
<rect x="1523.55" y="421.00" width="4.2" height="6.00" fill="#c2d5ee"/>
<rect x="1523.55" y="402.00" width="4.2" height="19.00" fill="#ff9f4a"/>
<rect x="1523.55" y="394.80" width="4.2" height="7.20" fill="#ffcc9a"/>
<rect x="1528.25" y="419.00" width="4.2" height="15.80" fill="#5799c7"/>
<rect x="1528.25" y="414.00" width="4.2" height="5.00" fill="#c2d5ee"/>
<rect x="1528.25" y="364.00" width="4.2" height="50.00" fill="#ff9f4a"/>
<rect x="1528.25" y="355.00" width="4.2" height="9.00" fill="#ffcc9a"/>
<rect x="1532.95" y="408.00" width="4.2" height="26.80" fill="#5799c7"/>
<rect x="1532.95" y="396.00" width="4.2" height="12.00" fill="#c2d5ee"/>
<rect x="1532.95" y="371.00" width="4.2" height="25.00" fill="#ff9f4a"/>
<rect x="1532.95" y="330.00" width="4.2" height="41.00" fill="#ffcc9a"/>
<rect x="1537.65" y="407.00" width="4.2" height="27.80" fill="#5799c7"/>
<rect x="1537.65" y="395.00" width="4.2" height="12.00" fill="#c2d5ee"/>
<rect x="1537.65" y="369.00" width="4.2" height="26.00" fill="#ff9f4a"/>
<rect x="1537.65" y="337.50" width="4.2" height="31.50" fill="#ffcc9a"/>
<rect x="1542.35" y="391.00" width="4.2" height="43.80" fill="#5799c7"/>
<rect x="1542.35" y="369.00" width="4.2" height="22.00" fill="#c2d5ee"/>
<rect x="1542.35" y="312.00" width="4.2" height="57.00" fill="#ff9f4a"/>
<rect x="1542.35" y="293.00" width="4.2" height="19.00" fill="#ffcc9a"/>
<rect x="1547.05" y="405.00" width="4.2" height="29.80" fill="#5799c7"/>
<rect x="1547.05" y="392.20" width="4.2" height="12.80" fill="#c2d5ee"/>
<rect x="1547.05" y="358.00" width="4.2" height="34.20" fill="#ff9f4a"/>
<rect x="1547.05" y="300.20" width="4.2" height="57.80" fill="#ffcc9a"/>
<rect x="1551.75" y="409.00" width="4.2" height="25.80" fill="#5799c7"/>
<rect x="1551.75" y="392.20" width="4.2" height="16.80" fill="#c2d5ee"/>
<rect x="1551.75" y="352.00" width="4.2" height="40.20" fill="#ff9f4a"/>
<rect x="1551.75" y="335.80" width="4.2" height="16.20" fill="#ffcc9a"/>
<rect x="1556.45" y="414.80" width="4.2" height="20.00" fill="#5799c7"/>
<rect x="1556.45" y="406.50" width="4.2" height="8.30" fill="#c2d5ee"/>
<rect x="1556.45" y="371.00" width="4.2" height="35.50" fill="#ff9f4a"/>
<rect x="1556.45" y="340.50" width="4.2" height="30.50" fill="#ffcc9a"/>
<rect x="1561.15" y="426.00" width="4.2" height="8.80" fill="#5799c7"/>
<rect x="1561.15" y="421.80" width="4.2" height="4.20" fill="#c2d5ee"/>
<rect x="1561.15" y="413.00" width="4.2" height="8.80" fill="#ff9f4a"/>
<rect x="1561.15" y="406.00" width="4.2" height="7.00" fill="#ffcc9a"/>
<rect x="1565.85" y="434.00" width="4.2" height="0.80" fill="#5799c7"/>
<rect x="1565.85" y="429.50" width="4.2" height="4.50" fill="#c2d5ee"/>
<rect x="1565.85" y="419.00" width="4.2" height="10.50" fill="#ff9f4a"/>
<rect x="1565.85" y="413.80" width="4.2" height="5.20" fill="#ffcc9a"/>
<rect x="1570.55" y="432.80" width="4.2" height="2.00" fill="#5799c7"/>
<rect x="1570.55" y="431.50" width="4.2" height="1.30" fill="#c2d5ee"/>
<rect x="1570.55" y="428.50" width="4.2" height="3.00" fill="#ff9f4a"/>
<rect x="1570.55" y="426.00" width="4.2" height="2.50" fill="#ffcc9a"/>
<rect x="1575.25" y="433.80" width="4.2" height="1.00" fill="#ffcc9a"/>
<rect x="1584.65" y="433.80" width="4.2" height="1.00" fill="#ffcc9a"/>
<line x1="1025.5" x2="1025.5" y1="293.0" y2="434.8" stroke="#000" stroke-width="1"/>
<text x="1021.5" y="297.0" text-anchor="end" class="t b">233</text>
<text x="1021.5" y="439.3" text-anchor="end" class="t">0</text>
<text x="1021.5" y="378.3" text-anchor="end" class="t">100</text>
<text x="1021.5" y="317.3" text-anchor="end" class="t">200</text>
<text x="1126.5" y="451" text-anchor="middle" class="t">25-Feb</text>
<text x="1229.5" y="451" text-anchor="middle" class="t">26-Feb</text>
<text x="1332.5" y="451" text-anchor="middle" class="t">27-Feb</text>
<text x="1436.5" y="451" text-anchor="middle" class="t">28-Feb</text>
<text x="1539.5" y="451" text-anchor="middle" class="t">29-Feb</text>
<text x="1642.5" y="451" text-anchor="middle" class="t">01-Mar</text>
<text x="1745.5" y="451" text-anchor="middle" class="t">02-Mar</text>
<circle cx="1596" cy="278" r="5" fill="#1f77b4" stroke="#1f77b4" stroke-width="2"/>
<text x="1604.5" y="282.2" class="t">DPa</text>
<circle cx="1652" cy="278" r="5" fill="#aec7e8" stroke="#aec7e8" stroke-width="2"/>
<text x="1660.5" y="282.2" class="t">DPb</text>
<circle cx="1708" cy="278" r="5" fill="#ff7f0e" stroke="#ff7f0e" stroke-width="2"/>
<text x="1716.5" y="282.2" class="t">DPc</text>
<circle cx="1763" cy="278" r="5" fill="#ffbb78" stroke="#ffbb78" stroke-width="2"/>
<text x="1771.5" y="282.2" class="t">DPd</text>
</svg>
<h2 style="left:58.6px;top:506.6px"><span style="left:0.0px;letter-spacing:-1.2px">Sensor</span> <span style="left:95.4px;letter-spacing:-0.5px">Details</span></h2>
<h2 style="left:964.0px;top:506.6px"><span style="left:0.0px;letter-spacing:0.0px">Map</span> <span style="left:65.6px;letter-spacing:-0.2px">Situation</span></h2>
<div id="tbl"><div class="th"><span class="c1">Sensor name</span><span class="c2">Type</span><span class="c3">From Street</span></div></div>
<div class="tr" style="top:590px"><span class="c1">DVa1b</span><span class="c2">Vehicle</span><span class="c3">Kollarova east straight</span></div>
<div class="tr" style="top:628px"><span class="c1">DVa2</span><span class="c2">Vehicle</span><span class="c3">Kollarova east left</span></div>
<div class="tr" style="top:666px"><span class="c1">DVb12b</span><span class="c2">Vehicle</span><span class="c3">Zizkova south left/straight</span></div>
<div class="tr" style="top:704px"><span class="c1">DVb3</span><span class="c2">Vehicle</span><span class="c3">Zizkova south right</span></div>
<div class="tr" style="top:742px"><span class="c1">DVc13b</span><span class="c2">Vehicle</span><span class="c3">Kollarova west straight</span></div>
<div class="tr" style="top:780px"><span class="c1">DVc2</span><span class="c2">Vehicle</span><span class="c3">Kollarova west left</span></div>
<div class="tr" style="top:818px"><span class="c1">DVd1b</span><span class="c2">Vehicle</span><span class="c3">Zizkova north straight</span></div>
<div class="tr" style="top:856px;border-bottom:none"><span class="c1">DVd3</span><span class="c2">Vehicle</span><span class="c3">Zizkova north right</span></div>

<div id="map"><svg width="875" height="334" viewBox="965 551 875 334" style="display:block;font-family:'Liberation Sans',sans-serif">
<rect x="965" y="551" width="875" height="334" fill="#e9e5dc"/>
<!-- light building blocks -->
<polygon points="965,689 1289,757 1162,885 1064,885 1136,808 965,760.6" fill="#f4f3ec"/>
<polygon points="1422,771 1745,847 1733,885 1307,885" fill="#f4f3ec"/>
<polygon points="1445,885 1462,878 1496,885" fill="#e9e5dc"/>
<polygon points="1786,885 1797,837 1840,866 1840,885" fill="#f4f3ec"/>
<!-- blue line -->
<polyline points="965,657.6 1363,741" fill="none" stroke="#6fa0f6" stroke-width="2.1"/>
<polyline points="1397,749 1749,824 1760,830" fill="none" stroke="#6fa0f6" stroke-width="2.1"/>
<!-- roads (white) -->
<g fill="#fff" stroke="#d8cfc6" stroke-width="0.8">
<!-- main road band west -->
<polygon points="960,608 996,614 1225,657 1288,668.7 1392,692.5 1402,695 1447,707 1630,743.5 1781,768 1790,772 1778,806 1770,804 1630,780.5 1406,737 1373,730.5 1225,698.5 960,648"/>
<!-- NW small road -->
<polygon points="981,545 1012,545 996,614 968,611"/>
<!-- diagonal road NE -->
<polygon points="1560,545 1619.5,545 1447,707 1402,695"/>
<!-- Zizkova -->
<polygon points="1373,730 1406,737 1253,890 1213,890"/>
<!-- Harantova -->
<polygon points="1842,585 1860,585 1860,643.4 1784.8,890 1741,890 1770,804 1781,768"/>
</g>
<!-- fill seams -->
<g fill="#fff">
<polygon points="965,609 996,615 1225,658 1288,669.7 1392,693.5 1402,696 1447,708 1630,744.5 1781,769 1790,773 1778,805 1770,803 1630,779.5 1406,736 1373,729.5 1225,697.5 965,647.3"/>
<polygon points="1403,694 1446,706 1408,738 1372,729"/>
<polygon points="1771,803 1782,769 1800,772 1790,806"/>
<polygon points="1375,729.3 1405,735.8 1398,745 1368,738"/>
<polygon points="966,611.5 996,616 1000,596 975,590"/>
</g>
<!-- parks -->
<g fill="#cadfaa">
<polygon points="1011.5,551 1553.5,551 1402.5,694.4 1392,692 1288,668.2 1225,656.5 996.8,613.6"/>
<polygon points="1613.5,551 1840,551 1840,591 1781.5,767.5 1630,743 1447.8,706.4"/>
</g>
<!-- park paths -->
<defs><clipPath id="pk"><polygon points="1011.5,551 1553.5,551 1402.5,694.4 1392,692 1288,668.2 1225,656.5 996.8,613.6"/></clipPath></defs>
<g clip-path="url(#pk)">
<g fill="#c9c8bb">
<polygon points="1000,574.8 1126,550.5 1180,550.5 1000,583.9"/>
</g>
<g fill="none" stroke="#c9c8bb" stroke-width="9.6" stroke-linejoin="miter">
<polyline points="1318.5,559 1287,672"/>
<polyline points="1282,544.5 1454,607 1476,630"/>
<polyline points="1220,538.9 1322,556.7"/>
</g>
<g fill="#d9d8cb">
<polygon points="1000,575.8 1131,550.5 1175,550.5 1000,582.9"/>
</g>
<g fill="none" stroke="#d9d8cb" stroke-width="7.6" stroke-linejoin="miter">
<polyline points="1318.5,559 1287,672"/>
<polyline points="1282,544.5 1454,607 1476,630"/>
<polyline points="1220,538.9 1322,556.7"/>
</g>
</g>
<!-- one-way arrow -->
<path d="M977.6,628.5 L980.3,619.5" fill="none" stroke="#a9c4ee" stroke-width="1.8"/><path d="M981.3,615.3 L983,621.6 L976.8,620.2z" fill="#a9c4ee"/>
<!-- shields -->
<g font-size="9.2" font-weight="700" fill="#fff" text-anchor="middle">
<rect x="1055" y="643" width="21" height="11" fill="#3873c9"/><text x="1065.6" y="651.3">139</text>
<rect x="1364" y="705" width="22" height="11" fill="#3873c9"/><text x="1375" y="713.3">139</text>
<rect x="1522" y="595" width="21" height="11" fill="#3873c9"/><text x="1532.6" y="603.3">139</text>
</g>
<!-- street labels -->
<g font-size="15.5" fill="#383533" stroke="#fff" stroke-width="0.22">
<text transform="translate(1134,665) rotate(11.5)">Mírové nám.</text>
<text transform="translate(1433,727) rotate(11)">Kollárova</text>
<text transform="translate(1565,755) rotate(11)">Kollárova</text>
<text transform="translate(1699,778) rotate(11)">Kollárova</text>
<text transform="translate(1276,853) rotate(-45)">Žižkova tř.</text>
<text transform="translate(1340,790) rotate(-45)">Žižkova tř.</text>
<text transform="translate(1835.5,681.5) rotate(-72)" font-size="14">Harantova</text>
<text transform="translate(1770,880.5) rotate(-72)" font-size="14">Harantova</text>
<text transform="translate(990.5,604) rotate(-77)">Mírové nám.</text>
</g>
<!-- POIs -->
<g font-size="11.5">
<text x="1122" y="805.6" fill="#8b5a47" stroke="#f4f3ec" stroke-width="2" paint-order="stroke" textLength="112">Restaurace Na Zvíkově</text>
<circle cx="1245.4" cy="802" r="8.5" fill="#fff"/>
<path d="M1241.5,797.5v4.2a1.6,1.6 0 0 0 3.2,0v-4.2M1243.1,797.5v9.5M1248.3,797.5v9.5M1248.3,797.5c-1.8,0.5 -1.8,5 0,5.4" fill="none" stroke="#f0852b" stroke-width="1.3"/>
<circle cx="1427.6" cy="794.5" r="8.5" fill="#fff"/>
<text x="1427.6" y="798.3" font-size="10.5" font-weight="700" fill="#5b6bc0" text-anchor="middle" textLength="12.5" lengthAdjust="spacingAndGlyphs">ATM</text>
<text x="1407" y="815.6" fill="#3d4574" stroke="#f4f3ec" stroke-width="2" paint-order="stroke" textLength="82">Česká spořitelna</text>
<text x="1407" y="826.6" fill="#3d4574" stroke="#f4f3ec" stroke-width="2" paint-order="stroke" textLength="90">Pečovatelský dům</text>
<circle cx="1327.4" cy="865.5" r="8.5" fill="#fff"/>
<path d="M1322.6,863h9.6v7h-9.6z" fill="#5b6bc0"/><path d="M1325,863v-1.6a2.4,2.4 0 0 1 4.8,0v1.6" fill="none" stroke="#5b6bc0" stroke-width="1.2"/>
<path d="M1325.4,866.2l2,1.6l2,-1.6" fill="none" stroke="#fff" stroke-width="1"/>
<text x="1306.4" y="886" fill="#3d4574" stroke="#e9e5dc" stroke-width="2" paint-order="stroke" textLength="60">Miloš Vakoč</text>
</g>
<!-- marker -->
<path d="M1403,717.5 C1402.5,707 1392,700 1392,689.5 A11,11 0 0 1 1414,689.5 C1414,700 1403.5,707 1403,717.5z" fill="#ea4335" stroke="#b3261e" stroke-width="0.8"/>
<path d="M1403,717.5 C1402.5,707 1392,700 1392,689.5 A11,11 0 0 1 1414,689.5 C1414,700 1403.5,707 1403,717.5z" fill="url(#mg)" />
<circle cx="1403" cy="689.3" r="3.7" fill="#5a1010"/>
<defs><linearGradient id="mg" x1="0" y1="0" x2="0" y2="1"><stop offset="0" stop-color="#ff8a7e" stop-opacity=".95"/><stop offset=".55" stop-color="#f4503f" stop-opacity=".3"/><stop offset="1" stop-color="#ea4335" stop-opacity="0"/></linearGradient></defs>
<!-- Google logo -->
<text x="971" y="878" font-size="20.5" letter-spacing="-0.45" stroke="#fff" stroke-width="2.2" paint-order="stroke" stroke-linejoin="round"><tspan fill="#4285f4">G</tspan><tspan fill="#ea4335">o</tspan><tspan fill="#fbbc05">o</tspan><tspan fill="#4285f4">g</tspan><tspan fill="#34a853">l</tspan><tspan fill="#ea4335">e</tspan></text>
<!-- copyright strip -->
<rect x="1551" y="871" width="289" height="14" fill="#f5f5f5" fill-opacity=".75"/>
<g font-size="9.6" fill="#444">
<text x="1556" y="881" textLength="109">Map data ©2016 Google</text>
<text x="1677.5" y="881" textLength="59">Terms of Use</text>
<text x="1750" y="881" textLength="83">Report a map error</text>
</g>
<!-- controls -->
<g>
<rect x="975.5" y="562" width="93" height="31" rx="2" fill="#000" fill-opacity=".18"/>
<rect x="975" y="561" width="93" height="31" rx="2" fill="#fff"/>
<line x1="1011.5" y1="561" x2="1011.5" y2="592" stroke="#e6e6e6"/>
<text x="982.3" y="580" font-size="11" fill="#1a1a1a" stroke="#1a1a1a" stroke-width="0.45" textLength="21.5">Map</text>
<text x="1020" y="580" font-size="11" fill="#565656">Satellite</text>
<rect x="1801.5" y="769" width="28" height="28" rx="2" fill="#000" fill-opacity=".18"/>
<rect x="1801" y="768" width="28" height="28" rx="2" fill="#fff"/>
<circle cx="1815" cy="775" r="3.5" fill="#f6b31c"/>
<path d="M1812.2,778.6h5.6c1.5,0 2,1 2.2,2l1,4.4l-1.2,0.4l-1.3,-3.6v8.4h-2.6v-5h-1.8v5h-2.6v-8.4l-1.3,3.6l-1.2,-0.4l1,-4.4c0.2,-1 0.7,-2 2.2,-2z" fill="#f6b31c"/>
<path d="M1813.5,778.8l1.5,2l1.5,-2z" fill="#e0702a"/>
<rect x="1801.5" y="807" width="28" height="55" rx="2" fill="#000" fill-opacity=".18"/>
<rect x="1801" y="806" width="28" height="55" rx="2" fill="#fff"/>
<line x1="1805" y1="833.5" x2="1825" y2="833.5" stroke="#e6e6e6"/>
<path d="M1810,819.5h11M1815.5,814v11M1810,847.2h11" stroke="#666" stroke-width="2.3" fill="none"/>
</g>
</svg>
</div>
<div id="hr"></div>
<div style="position:absolute;left:1899px;top:86px;width:1px;height:855px;background:#dedede"></div>
</body></html>
